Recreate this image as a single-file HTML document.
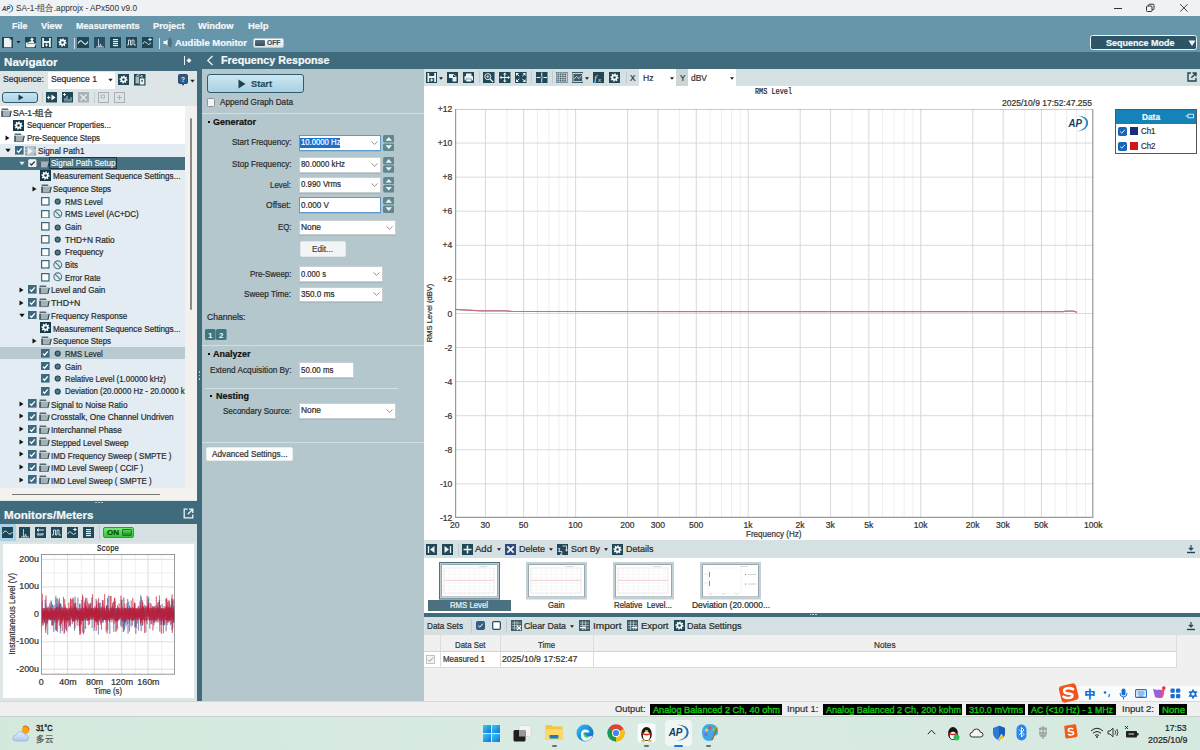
<!DOCTYPE html><html><head><meta charset="utf-8"><title>APx500</title><style>
*{margin:0;padding:0;box-sizing:border-box}
html,body{width:1200px;height:750px;overflow:hidden;background:#fff;font-family:'Liberation Sans',sans-serif}
div,span,svg{position:absolute}
.t{white-space:pre}
.t{-webkit-text-stroke:0.22px currentColor}
</style></head><body><div style="left:0px;top:0px;width:1200px;height:16px;background:#eef2f4"></div>
<div style="left:0px;top:16px;width:1200px;height:35.5px;background:#6795a9"></div>
<div style="left:0px;top:51.5px;width:1200px;height:17.5px;background:#406b7c"></div>
<div style="left:0px;top:69px;width:197px;height:632px;background:#dde5e7"></div>
<div style="left:0px;top:69px;width:197px;height:1.75px;background:#406b7c"></div>
<div style="left:197px;top:69px;width:5px;height:632px;background:#406b7c"></div>
<div style="left:202px;top:69px;width:221.5px;height:632px;background:#b4c7cc"></div>
<div style="left:423.5px;top:69px;width:776.5px;height:17px;background:#d5e0e2"></div>
<div style="left:423.5px;top:86px;width:776.5px;height:454px;background:#fff"></div>
<div style="left:423.5px;top:540px;width:776.5px;height:18px;background:#d5e0e2"></div>
<div style="left:423.5px;top:558px;width:776.5px;height:54.5px;background:#fff"></div>
<div style="left:423.5px;top:612.5px;width:776.5px;height:4.5px;background:#406b7c"></div>
<div style="left:423.5px;top:617px;width:776.5px;height:18px;background:#d5e0e2"></div>
<div style="left:423.5px;top:635px;width:776.5px;height:66px;background:#f0f0f0"></div>
<div style="left:0px;top:701px;width:1200px;height:15px;background:#f0f0f0;border-top:1px solid #d8d8d8"></div>
<div style="left:0px;top:716px;width:1200px;height:34px;background:linear-gradient(90deg,#d4e8dc,#d9ebe2 50%,#d6e9df)"></div>
<svg style="left:1px;top:2.5px" width="13" height="11" viewBox="0 0 23 19"><path d="M10.5 1.4 Q22 2 21.7 9.4 Q21.3 17 10 17.8 Q19.4 15.6 19.6 9.4 Q19.7 3.5 10.5 1.4Z" fill="#2e7fb0"/><text x="1.8" y="13.6" font-family="Liberation Sans" font-weight="700" font-style="italic" font-size="11.5" fill="#1c4a6a" transform="scale(0.92 1)">AP</text></svg>
<span class="t" style="left:16.00px;top:3.79px;font-size:8.99px;line-height:8.99px;font-weight:400;color:#303030;font-family:'Liberation Sans';transform:scaleX(0.9210);transform-origin:0 0;-webkit-text-stroke:0;">SA-1-组合.approjx - APx500 v9.0</span>
<div style="left:1114px;top:7.5px;width:7.5px;height:0.9px;background:#333"></div>
<svg style="left:1145px;top:3px" width="11" height="10" viewBox="0 0 11 10">
<rect x="1.5" y="3" width="5.5" height="5.5" rx="1" fill="none" stroke="#333" stroke-width="1"/>
<path d="M3.5 3 V2.2 Q3.5 1.2 4.5 1.2 H8 Q9 1.2 9 2.2 V5.8 Q9 6.8 8 6.8 H7" fill="none" stroke="#333" stroke-width="1"/></svg>
<svg style="left:1179px;top:3px" width="10" height="10" viewBox="0 0 10 10">
<path d="M1.2 1.2 L8.6 8.6 M8.6 1.2 L1.2 8.6" stroke="#333" stroke-width="0.95"/></svg>
<span class="t" style="left:12.00px;top:20.90px;font-size:9.8px;line-height:9.8px;font-weight:700;color:#f4f8fa;font-family:'Liberation Sans';transform:scaleX(0.9177);transform-origin:0 0;">File</span>
<span class="t" style="left:41.00px;top:20.90px;font-size:9.8px;line-height:9.8px;font-weight:700;color:#f4f8fa;font-family:'Liberation Sans';transform:scaleX(0.9478);transform-origin:0 0;">View</span>
<span class="t" style="left:76.00px;top:20.90px;font-size:9.8px;line-height:9.8px;font-weight:700;color:#f4f8fa;font-family:'Liberation Sans';transform:scaleX(0.9255);transform-origin:0 0;">Measurements</span>
<span class="t" style="left:153.00px;top:20.90px;font-size:9.8px;line-height:9.8px;font-weight:700;color:#f4f8fa;font-family:'Liberation Sans';transform:scaleX(0.9483);transform-origin:0 0;">Project</span>
<span class="t" style="left:198.00px;top:20.90px;font-size:9.8px;line-height:9.8px;font-weight:700;color:#f4f8fa;font-family:'Liberation Sans';transform:scaleX(0.9475);transform-origin:0 0;">Window</span>
<span class="t" style="left:248.00px;top:20.90px;font-size:9.8px;line-height:9.8px;font-weight:700;color:#f4f8fa;font-family:'Liberation Sans';transform:scaleX(0.9654);transform-origin:0 0;">Help</span>
<svg style="left:1.5px;top:37px" width="11.5" height="11" viewBox="0 0 11.5 11"><rect width="11.5" height="11" fill="#1f4756"/><path d="M2 1 H7 L9.5 3.5 V10.3 H2 Z" fill="#eef2f3"/><path d="M7 1 V3.5 H9.5" fill="#c5d0d4"/></svg>
<svg style="left:16px;top:40px" width="5" height="4" viewBox="0 0 5 4"><path d="M0.5 1 H4.5 L2.5 3.5Z" fill="#10232b"/></svg>
<svg style="left:24.5px;top:37px" width="11.5" height="11" viewBox="0 0 11.5 11"><rect width="11.5" height="11" fill="#1f4756"/><path d="M0.8 5.5 H3.5 L4.3 4.5 H9 V6 H3 L1.2 10.3 H0.8Z" fill="#eef2f3"/><path d="M3 6.5 H11 L9.3 10.3 H1.2Z" fill="#eef2f3"/><path d="M7 0.5 L9.2 2.8 H7.8 V5 H6.2 V2.8 H4.8Z" fill="#fff"/></svg>
<svg style="left:41px;top:37px" width="11" height="11" viewBox="0 0 11 11"><rect width="11" height="11" fill="#1f4756"/><rect x="1.2" y="1" width="8.6" height="9" fill="#e8eef0"/><rect x="3" y="1" width="5" height="3" fill="#1f4756"/><rect x="3" y="6" width="5" height="4" fill="#1f4756"/><path d="M5.5 6.5 V9.5 M4 8 H7" stroke="#fff" stroke-width="0.9"/></svg>
<svg style="left:57px;top:37px" width="11" height="11" viewBox="0 0 11 11"><rect width="11" height="11" fill="#1f4756"/><path d="M5.71 1.21 L6.54 1.33 L6.83 2.70 L7.35 3.01 L8.69 2.61 L9.19 3.29 L8.42 4.46 L8.57 5.05 L9.79 5.71 L9.67 6.54 L8.30 6.83 L7.99 7.35 L8.39 8.69 L7.71 9.19 L6.54 8.42 L5.95 8.57 L5.29 9.79 L4.46 9.67 L4.17 8.30 L3.65 7.99 L2.31 8.39 L1.81 7.71 L2.58 6.54 L2.43 5.95 L1.21 5.29 L1.33 4.46 L2.70 4.17 L3.01 3.65 L2.61 2.31 L3.29 1.81 L4.46 2.58 L5.05 2.43Z" fill="#f4f7f8"/><circle cx="5.5" cy="5.5" r="1.25" fill="#1f4756"/></svg>
<div style="left:73.5px;top:38px;width:1.5px;height:11px;background:#d7e3e8"></div>
<svg style="left:77px;top:37px" width="12" height="11" viewBox="0 0 12 11"><rect width="12" height="11" fill="#1f4756"/><path d="M1 6.5 Q3.2 1.8 6 5.5 T11 4.5" fill="none" stroke="#dfe9ec" stroke-width="1.1"/></svg>
<svg style="left:94px;top:37px" width="11" height="11" viewBox="0 0 11 11"><rect width="11" height="11" fill="#24506a"/><path d="M2 10 H10 M4.5 10 V2 M5.5 10 L6.5 7 L7.5 10" fill="none" stroke="#dfe9ec" stroke-width="0.8"/></svg>
<svg style="left:110px;top:37px" width="11" height="11" viewBox="0 0 11 11"><rect width="11" height="11" fill="#1f4756"/><rect x="3" y="2" width="5" height="1.2" fill="#dfe9ec"/><rect x="3" y="4" width="5" height="1.2" fill="#dfe9ec"/><rect x="3" y="6" width="5" height="1.2" fill="#dfe9ec"/><rect x="3" y="8" width="5" height="1.2" fill="#dfe9ec"/></svg>
<svg style="left:126px;top:37px" width="11" height="11" viewBox="0 0 11 11"><rect width="11" height="11" fill="#1f4756"/><path d="M1 8 H2.5 V3 H4.5 V8 H6 V3 H8 V8 H10" fill="none" stroke="#dfe9ec" stroke-width="0.9"/></svg>
<svg style="left:142px;top:37px" width="11" height="11" viewBox="0 0 11 11"><rect width="11" height="11" fill="#1f4756"/><path d="M0.8 7 Q2.5 3 4.5 6 T9 6" fill="none" stroke="#dfe9ec" stroke-width="0.9"/><path d="M8 0.8 V4.2 M6.3 2.5 H9.7" stroke="#fff" stroke-width="1"/></svg>
<div style="left:158.5px;top:38px;width:1.5px;height:11px;background:#d7e3e8"></div>
<svg style="left:162.5px;top:37px" width="10" height="11" viewBox="0 0 10 11"><path d="M0.5 4 H2.5 L4.5 2.5 V8.5 L2.5 7 H0.5Z" fill="#eef3f5"/><path d="M5 2.2 L8 0.5 Q9.8 5.5 8 10.5 L5 8.8Z" fill="#52707c"/></svg>
<span class="t" style="left:175.00px;top:38.20px;font-size:9.8px;line-height:9.8px;font-weight:700;color:#f4f8fa;font-family:'Liberation Sans';transform:scaleX(0.9656);transform-origin:0 0;">Audible Monitor</span>
<div style="left:253px;top:37.5px;width:31px;height:10.5px;background:linear-gradient(#fdfdfd,#dfe3e5);border:1px solid #b9c7cc;border-radius:2px"></div>
<div style="left:255px;top:39.5px;width:10px;height:6.5px;background:linear-gradient(#56778a,#30505e);border-radius:1px"></div>
<span class="t" style="left:267.00px;top:39.30px;font-size:7.92px;line-height:7.92px;font-weight:700;color:#3b4e57;font-family:'Liberation Sans';transform:scaleX(0.8538);transform-origin:0 0;">OFF</span>
<div style="left:1090px;top:35px;width:107px;height:15.3px;background:#2e5565;border:1.3px solid #f0f4f6;border-radius:2.5px"></div>
<span class="t" style="left:1105.50px;top:37.90px;font-size:9.8px;line-height:9.8px;font-weight:700;color:#f4f8fa;font-family:'Liberation Sans';transform:scaleX(0.9183);transform-origin:0 0;">Sequence Mode</span>
<svg style="left:1187.5px;top:39px" width="8" height="8" viewBox="0 0 8 8"><path d="M0.5 1.5 H7.5 L4 7Z" fill="#f4f8fa"/></svg>
<span class="t" style="left:3.50px;top:55.65px;font-size:11.75px;line-height:11.75px;font-weight:700;color:#f4f8fa;font-family:'Liberation Sans';transform:scaleX(0.9870);transform-origin:0 0;">Navigator</span>
<div style="left:184px;top:56px;width:1.3px;height:9px;background:#eef3f5"></div>
<svg style="left:186px;top:57px" width="6" height="7" viewBox="0 0 6 7"><path d="M0.5 3.5 L3 1 L5.5 3.5 L3 6Z" fill="#eef3f5"/></svg>
<svg style="left:206px;top:55px" width="8" height="11" viewBox="0 0 8 11"><path d="M6.5 1 L1.8 5.5 L6.5 10" fill="none" stroke="#eef3f5" stroke-width="1.3"/></svg>
<span class="t" style="left:221.00px;top:54.58px;font-size:11.13px;line-height:11.13px;font-weight:700;color:#f4f8fa;font-family:'Liberation Sans';transform:scaleX(0.9642);transform-origin:0 0;">Frequency Response</span>
<span class="t" style="left:2.50px;top:74.78px;font-size:8.88px;line-height:8.88px;font-weight:400;color:#2d2d2d;font-family:'Liberation Sans';transform:scaleX(0.9658);transform-origin:0 0;">Sequence:</span>
<div style="left:48px;top:71.5px;width:67px;height:17px;background:#fff"></div>
<span class="t" style="left:51.00px;top:74.78px;font-size:8.88px;line-height:8.88px;font-weight:400;color:#2d2d2d;font-family:'Liberation Sans';transform:scaleX(0.9710);transform-origin:0 0;">Sequence 1</span>
<svg style="left:108px;top:78px" width="5" height="4" viewBox="0 0 5 4"><path d="M0.3 0.8 H4.7 L2.5 3.4Z" fill="#222"/></svg>
<svg style="left:118px;top:74.3px" width="11" height="11" viewBox="0 0 11 11"><rect width="11" height="11" fill="#1f4756"/><path d="M5.71 1.31 L6.52 1.43 L6.78 2.79 L7.29 3.09 L8.61 2.68 L9.10 3.34 L8.32 4.49 L8.47 5.06 L9.69 5.71 L9.57 6.52 L8.21 6.78 L7.91 7.29 L8.32 8.61 L7.66 9.10 L6.51 8.32 L5.94 8.47 L5.29 9.69 L4.48 9.57 L4.22 8.21 L3.71 7.91 L2.39 8.32 L1.90 7.66 L2.68 6.51 L2.53 5.94 L1.31 5.29 L1.43 4.48 L2.79 4.22 L3.09 3.71 L2.68 2.39 L3.34 1.90 L4.49 2.68 L5.06 2.53Z" fill="#f4f7f8"/><circle cx="5.5" cy="5.5" r="1.2" fill="#1f4756"/></svg>
<svg style="left:134px;top:74.3px" width="11.5" height="11.5" viewBox="0 0 11.5 11.5"><rect width="11.5" height="11.5" fill="#1f4756"/><path d="M1.5 2.5 H5 V9.5 H1.5Z" fill="#a9bcc3"/><path d="M2.5 1.5 L5.5 0.8" stroke="#fff" stroke-width="0.8"/><rect x="5.8" y="4.5" width="4.5" height="6" fill="#eef2f3"/><rect x="7" y="6.3" width="2" height="1.2" fill="#1f4756"/><path d="M5.5 3 L8 1.2 V4" fill="none" stroke="#eef2f3" stroke-width="0.8"/></svg>
<svg style="left:178px;top:74px" width="10" height="12" viewBox="0 0 10 12"><path d="M1.5 0.5 H8.5 Q9.5 0.5 9.5 1.5 V8.5 Q9.5 9.5 8.5 9.5 H6 L5 11.3 L4 9.5 H1.5 Q0.5 9.5 0.5 8.5 V1.5 Q0.5 0.5 1.5 0.5Z" fill="#2a5a86" stroke="#173b59" stroke-width="0.8"/><text x="5" y="7.6" text-anchor="middle" font-family="Liberation Sans" font-weight="700" font-size="6.5" fill="#e8f0f8">?</text></svg>
<svg style="left:189.5px;top:79px" width="5" height="4" viewBox="0 0 5 4"><path d="M0.3 0.8 H4.7 L2.5 3.4Z" fill="#222"/></svg>
<div style="left:2px;top:92px;width:36px;height:10.5px;background:linear-gradient(#c8e4f0,#a9d2e4);border:1.2px solid #2f5c6c;border-radius:3px"></div>
<svg style="left:18px;top:94px" width="6" height="7" viewBox="0 0 6 7"><path d="M0.5 0.5 L5.5 3.5 L0.5 6.5Z" fill="#1d4250"/></svg>
<div style="left:41.5px;top:92px;width:0.8px;height:11px;background:#c5cfd2"></div>
<svg style="left:46px;top:92px" width="11" height="10.5" viewBox="0 0 11 10.5"><rect width="11" height="10.5" fill="#1f4756"/><path d="M1 5.5 H4.5 M2.7 3.7 V7.3" stroke="#fff" stroke-width="0.9"/><path d="M5.5 2.5 L9.5 5.5 L5.5 8.5Z" fill="#fff"/><rect x="0" y="4.9" width="11" height="0.0" fill="none"/></svg>
<svg style="left:62px;top:92px" width="11" height="10.5" viewBox="0 0 11 10.5"><rect width="11" height="10.5" fill="#1f4756"/><path d="M1 2.5 H4 M2.5 1 V4" stroke="#fff" stroke-width="0.9"/><path d="M3 9.5 V6 M5 9.5 V4 M7 9.5 V7 M9 9.5 V5" stroke="#bcd0d8" stroke-width="1"/></svg>
<svg style="left:78px;top:92px" width="11" height="11" viewBox="0 0 11 11"><rect width="11" height="10.5" fill="#a9b1b4"/><path d="M2.5 2.5 L8.5 8.5 M8.5 2.5 L2.5 8.5" stroke="#eef0f1" stroke-width="1.2"/></svg>
<div style="left:94px;top:92px;width:0.8px;height:11px;background:#c5cfd2"></div>
<svg style="left:98px;top:92px" width="11" height="11" viewBox="0 0 11 11"><rect x="0.5" y="0.5" width="10" height="10" fill="#dfe3e4" stroke="#a9b1b4" stroke-width="1"/><path d="M3 3 H6.5 V6 H3Z" fill="none" stroke="#a9b1b4" stroke-width="0.9"/></svg>
<svg style="left:114px;top:92px" width="11" height="11" viewBox="0 0 11 11"><rect x="0.5" y="0.5" width="10" height="10" fill="#dfe3e4" stroke="#a9b1b4" stroke-width="1"/><path d="M5.5 3 V8 M3 5.5 H8" stroke="#a9b1b4" stroke-width="0.9"/></svg>
<div style="left:0px;top:106px;width:185.2px;height:38px;background:#fff"></div>
<div style="left:0px;top:144px;width:185.2px;height:343.5px;background:#e2ecf2"></div>
<div style="left:185.2px;top:106px;width:11.8px;height:381.5px;background:#f3f1ee"></div>
<div style="left:190px;top:118px;width:2px;height:192px;background:#8a8a8a;border-radius:1px"></div>
<div style="left:0px;top:487.5px;width:197px;height:12.5px;background:#f3f2ef"></div>
<div style="left:12px;top:494px;width:148px;height:1.2px;background:#777"></div>
<svg style="left:1px;top:108.0325px" width="11" height="9.5" viewBox="0 0 11 9.5"><path d="M0.6 0.4 H6.6 Q7.3 0.4 7.3 1.1 V1.9 H0.6Z" fill="#56686e"/><path d="M0.4 2.6 H10.7 L9.3 8.9 H0.4Z" fill="#a3b2b6"/><path d="M1.05 2.8 V8.8" stroke="#2c3c42" stroke-width="1.3"/><path d="M10.2 3 L8.9 8.7" stroke="#2c3c42" stroke-width="1.1"/><path d="M0.6 8.6 H9.2" stroke="#56676c" stroke-width="0.7"/></svg>
<span class="t" style="left:13.00px;top:108.63px;font-size:8.88px;line-height:8.88px;font-weight:400;color:#2b2b2b;font-family:'Liberation Sans';transform:scaleX(0.9708);transform-origin:0 0;">SA-1-组合</span>
<svg style="left:13px;top:119.6975px" width="11" height="11" viewBox="0 0 11 11"><rect width="11" height="11" fill="#12394a"/><path d="M5.71 1.21 L6.54 1.33 L6.83 2.70 L7.35 3.01 L8.69 2.61 L9.19 3.29 L8.42 4.46 L8.57 5.05 L9.79 5.71 L9.67 6.54 L8.30 6.83 L7.99 7.35 L8.39 8.69 L7.71 9.19 L6.54 8.42 L5.95 8.57 L5.29 9.79 L4.46 9.67 L4.17 8.30 L3.65 7.99 L2.31 8.39 L1.81 7.71 L2.58 6.54 L2.43 5.95 L1.21 5.29 L1.33 4.46 L2.70 4.17 L3.01 3.65 L2.61 2.31 L3.29 1.81 L4.46 2.58 L5.05 2.43Z" fill="#f4f7f8"/><circle cx="5.5" cy="5.5" r="1.25" fill="#12394a"/></svg>
<span class="t" style="left:27.00px;top:121.33px;font-size:8.88px;line-height:8.88px;font-weight:400;color:#2b2b2b;font-family:'Liberation Sans';transform:scaleX(0.9008);transform-origin:0 0;">Sequencer Properties...</span>
<svg style="left:5px;top:134.8625px" width="5" height="6" viewBox="0 0 5 6"><path d="M0.5 0.5 L4.5 3 L0.5 5.5Z" fill="#111"/></svg>
<svg style="left:14px;top:133.3625px" width="11" height="9.5" viewBox="0 0 11 9.5"><path d="M0.6 0.4 H6.6 Q7.3 0.4 7.3 1.1 V1.9 H0.6Z" fill="#56686e"/><path d="M0.4 2.6 H10.7 L9.3 8.9 H0.4Z" fill="#a3b2b6"/><path d="M1.05 2.8 V8.8" stroke="#2c3c42" stroke-width="1.3"/><path d="M10.2 3 L8.9 8.7" stroke="#2c3c42" stroke-width="1.1"/><path d="M0.6 8.6 H9.2" stroke="#56676c" stroke-width="0.7"/></svg>
<span class="t" style="left:27.00px;top:134.03px;font-size:8.88px;line-height:8.88px;font-weight:400;color:#2b2b2b;font-family:'Liberation Sans';transform:scaleX(0.8913);transform-origin:0 0;">Pre-Sequence Steps</span>
<svg style="left:5px;top:148.2275px" width="6" height="5" viewBox="0 0 6 5"><path d="M0.3 0.8 H5.7 L3 4.3Z" fill="#111"/></svg>
<svg style="left:15px;top:146.0275px" width="8.6" height="8.6" viewBox="0 0 9 9"><rect x="0" y="0" width="9" height="9" fill="#3b6a7f"/><path d="M2 4.8 L3.7 6.5 L7.1 2.4" fill="none" stroke="#fff" stroke-width="1.35"/></svg>
<svg style="left:25px;top:145.5275px" width="11" height="10" viewBox="0 0 11 10"><rect x="0" y="0" width="11" height="10" fill="#b5c5cb"/><path d="M3 1.5 L8 5 L3 8.5Z" fill="#e9eff1"/><path d="M0 2 H2 M0 5 H2 M0 8 H2 M9 2 H11 M9 8 H11" stroke="#6f8a94" stroke-width="1"/></svg>
<span class="t" style="left:38.00px;top:146.73px;font-size:8.88px;line-height:8.88px;font-weight:400;color:#2b2b2b;font-family:'Liberation Sans';transform:scaleX(0.9236);transform-origin:0 0;">Signal Path1</span>
<div style="left:0px;top:156.86px;width:185.2px;height:12.665px;background:#44707f"></div>
<svg style="left:19px;top:160.8925px" width="6" height="5" viewBox="0 0 6 5"><path d="M0.3 0.8 H5.7 L3 4.3Z" fill="#e8eef0"/></svg>
<svg style="left:28px;top:158.69250000000002px" width="8.6" height="8.6" viewBox="0 0 9 9"><rect x="0.5" y="0.5" width="8" height="8" rx="1.2" fill="#f4f7f8" stroke="#d8e2e6" stroke-width="0.8"/><path d="M2 4.6 L3.7 6.3 L7 2.6" fill="none" stroke="#2a3d45" stroke-width="1.3"/></svg>
<svg style="left:38.5px;top:158.69250000000002px" width="11" height="9.5" viewBox="0 0 11 9.5"><path d="M0.6 0.4 H6.6 Q7.3 0.4 7.3 1.1 V1.9 H0.6Z" fill="#56686e"/><path d="M0.4 2.6 H10.7 L9.3 8.9 H0.4Z" fill="#a3b2b6"/><path d="M1.05 2.8 V8.8" stroke="#2c3c42" stroke-width="1.3"/><path d="M10.2 3 L8.9 8.7" stroke="#2c3c42" stroke-width="1.1"/><path d="M0.6 8.6 H9.2" stroke="#56676c" stroke-width="0.7"/></svg>
<div style="left:49px;top:157.36px;width:67.5px;height:11.665px;border:0.8px solid #1d3440"></div>
<span class="t" style="left:51.00px;top:159.43px;font-size:8.88px;line-height:8.88px;font-weight:400;color:#f2f6f8;font-family:'Liberation Sans';transform:scaleX(0.9077);transform-origin:0 0;">Signal Path Setup</span>
<svg style="left:40px;top:170.35750000000002px" width="11" height="11" viewBox="0 0 11 11"><rect width="11" height="11" fill="#12394a"/><path d="M5.71 1.21 L6.54 1.33 L6.83 2.70 L7.35 3.01 L8.69 2.61 L9.19 3.29 L8.42 4.46 L8.57 5.05 L9.79 5.71 L9.67 6.54 L8.30 6.83 L7.99 7.35 L8.39 8.69 L7.71 9.19 L6.54 8.42 L5.95 8.57 L5.29 9.79 L4.46 9.67 L4.17 8.30 L3.65 7.99 L2.31 8.39 L1.81 7.71 L2.58 6.54 L2.43 5.95 L1.21 5.29 L1.33 4.46 L2.70 4.17 L3.01 3.65 L2.61 2.31 L3.29 1.81 L4.46 2.58 L5.05 2.43Z" fill="#f4f7f8"/><circle cx="5.5" cy="5.5" r="1.25" fill="#12394a"/></svg>
<span class="t" style="left:53.00px;top:172.13px;font-size:8.88px;line-height:8.88px;font-weight:400;color:#2b2b2b;font-family:'Liberation Sans';transform:scaleX(0.9196);transform-origin:0 0;">Measurement Sequence Settings...</span>
<svg style="left:32px;top:185.5225px" width="5" height="6" viewBox="0 0 5 6"><path d="M0.5 0.5 L4.5 3 L0.5 5.5Z" fill="#111"/></svg>
<svg style="left:41px;top:184.0225px" width="11" height="9.5" viewBox="0 0 11 9.5"><path d="M0.6 0.4 H6.6 Q7.3 0.4 7.3 1.1 V1.9 H0.6Z" fill="#56686e"/><path d="M0.4 2.6 H10.7 L9.3 8.9 H0.4Z" fill="#a3b2b6"/><path d="M1.05 2.8 V8.8" stroke="#2c3c42" stroke-width="1.3"/><path d="M10.2 3 L8.9 8.7" stroke="#2c3c42" stroke-width="1.1"/><path d="M0.6 8.6 H9.2" stroke="#56676c" stroke-width="0.7"/></svg>
<span class="t" style="left:53.00px;top:184.83px;font-size:8.88px;line-height:8.88px;font-weight:400;color:#2b2b2b;font-family:'Liberation Sans';transform:scaleX(0.8904);transform-origin:0 0;">Sequence Steps</span>
<svg style="left:41.4px;top:197.08750000000003px" width="8.6" height="8.6" viewBox="0 0 9 9"><rect x="0.65" y="0.65" width="7.7" height="7.7" fill="#fff" stroke="#3b6a7f" stroke-width="1.3"/></svg>
<svg style="left:54px;top:197.18750000000003px" width="8" height="8" viewBox="0 0 8 8"><circle cx="3.7" cy="4.5" r="2.55" fill="#4f7b88" stroke="#22414c" stroke-width="1.05"/></svg>
<span class="t" style="left:65.00px;top:197.53px;font-size:8.88px;line-height:8.88px;font-weight:400;color:#2b2b2b;font-family:'Liberation Sans';transform:scaleX(0.8685);transform-origin:0 0;">RMS Level</span>
<svg style="left:41.4px;top:209.7525px" width="8.6" height="8.6" viewBox="0 0 9 9"><rect x="0.65" y="0.65" width="7.7" height="7.7" fill="#fff" stroke="#3b6a7f" stroke-width="1.3"/></svg>
<svg style="left:53px;top:209.05249999999998px" width="10" height="10" viewBox="0 0 10 10"><circle cx="4.8" cy="4.8" r="3.9" fill="none" stroke="#4a7c88" stroke-width="1.1"/><path d="M2.1 2.1 L7.5 7.5" stroke="#4a7c88" stroke-width="1.1"/></svg>
<span class="t" style="left:65.00px;top:210.23px;font-size:8.88px;line-height:8.88px;font-weight:400;color:#2b2b2b;font-family:'Liberation Sans';transform:scaleX(0.8974);transform-origin:0 0;">RMS Level (AC+DC)</span>
<svg style="left:41.4px;top:222.41750000000002px" width="8.6" height="8.6" viewBox="0 0 9 9"><rect x="0.65" y="0.65" width="7.7" height="7.7" fill="#fff" stroke="#3b6a7f" stroke-width="1.3"/></svg>
<svg style="left:54px;top:222.5175px" width="8" height="8" viewBox="0 0 8 8"><circle cx="3.7" cy="4.5" r="2.55" fill="#4f7b88" stroke="#22414c" stroke-width="1.05"/></svg>
<span class="t" style="left:65.00px;top:222.93px;font-size:8.88px;line-height:8.88px;font-weight:400;color:#2b2b2b;font-family:'Liberation Sans';transform:scaleX(0.8853);transform-origin:0 0;">Gain</span>
<svg style="left:41.4px;top:235.0825px" width="8.6" height="8.6" viewBox="0 0 9 9"><rect x="0.65" y="0.65" width="7.7" height="7.7" fill="#fff" stroke="#3b6a7f" stroke-width="1.3"/></svg>
<svg style="left:54px;top:235.1825px" width="8" height="8" viewBox="0 0 8 8"><circle cx="3.7" cy="4.5" r="2.55" fill="#4f7b88" stroke="#22414c" stroke-width="1.05"/></svg>
<span class="t" style="left:65.00px;top:235.63px;font-size:8.88px;line-height:8.88px;font-weight:400;color:#2b2b2b;font-family:'Liberation Sans';transform:scaleX(0.9353);transform-origin:0 0;">THD+N Ratio</span>
<svg style="left:41.4px;top:247.7475px" width="8.6" height="8.6" viewBox="0 0 9 9"><rect x="0.65" y="0.65" width="7.7" height="7.7" fill="#fff" stroke="#3b6a7f" stroke-width="1.3"/></svg>
<svg style="left:54px;top:247.8475px" width="8" height="8" viewBox="0 0 8 8"><circle cx="3.7" cy="4.5" r="2.55" fill="#4f7b88" stroke="#22414c" stroke-width="1.05"/></svg>
<span class="t" style="left:65.00px;top:248.33px;font-size:8.88px;line-height:8.88px;font-weight:400;color:#2b2b2b;font-family:'Liberation Sans';transform:scaleX(0.9156);transform-origin:0 0;">Frequency</span>
<svg style="left:41.4px;top:260.41249999999997px" width="8.6" height="8.6" viewBox="0 0 9 9"><rect x="0.65" y="0.65" width="7.7" height="7.7" fill="#fff" stroke="#3b6a7f" stroke-width="1.3"/></svg>
<svg style="left:53px;top:259.7125px" width="10" height="10" viewBox="0 0 10 10"><circle cx="4.8" cy="4.8" r="3.9" fill="none" stroke="#4a7c88" stroke-width="1.1"/><path d="M2.1 2.1 L7.5 7.5" stroke="#4a7c88" stroke-width="1.1"/></svg>
<span class="t" style="left:65.00px;top:261.03px;font-size:8.88px;line-height:8.88px;font-weight:400;color:#2b2b2b;font-family:'Liberation Sans';transform:scaleX(0.8786);transform-origin:0 0;">Bits</span>
<svg style="left:41.4px;top:273.07749999999993px" width="8.6" height="8.6" viewBox="0 0 9 9"><rect x="0.65" y="0.65" width="7.7" height="7.7" fill="#fff" stroke="#3b6a7f" stroke-width="1.3"/></svg>
<svg style="left:53px;top:272.37749999999994px" width="10" height="10" viewBox="0 0 10 10"><circle cx="4.8" cy="4.8" r="3.9" fill="none" stroke="#4a7c88" stroke-width="1.1"/><path d="M2.1 2.1 L7.5 7.5" stroke="#4a7c88" stroke-width="1.1"/></svg>
<span class="t" style="left:65.00px;top:273.73px;font-size:8.88px;line-height:8.88px;font-weight:400;color:#2b2b2b;font-family:'Liberation Sans';transform:scaleX(0.8696);transform-origin:0 0;">Error Rate</span>
<svg style="left:19px;top:286.8425px" width="5" height="6" viewBox="0 0 5 6"><path d="M0.5 0.5 L4.5 3 L0.5 5.5Z" fill="#111"/></svg>
<svg style="left:28px;top:285.3425px" width="8.6" height="8.6" viewBox="0 0 9 9"><rect x="0" y="0" width="9" height="9" fill="#3b6a7f"/><path d="M2 4.8 L3.7 6.5 L7.1 2.4" fill="none" stroke="#fff" stroke-width="1.35"/></svg>
<svg style="left:38.5px;top:285.3425px" width="11" height="9.5" viewBox="0 0 11 9.5"><path d="M0.6 0.4 H6.6 Q7.3 0.4 7.3 1.1 V1.9 H0.6Z" fill="#56686e"/><path d="M0.4 2.6 H10.7 L9.3 8.9 H0.4Z" fill="#a3b2b6"/><path d="M1.05 2.8 V8.8" stroke="#2c3c42" stroke-width="1.3"/><path d="M10.2 3 L8.9 8.7" stroke="#2c3c42" stroke-width="1.1"/><path d="M0.6 8.6 H9.2" stroke="#56676c" stroke-width="0.7"/></svg>
<span class="t" style="left:51.00px;top:286.43px;font-size:8.88px;line-height:8.88px;font-weight:400;color:#2b2b2b;font-family:'Liberation Sans';transform:scaleX(0.9078);transform-origin:0 0;">Level and Gain</span>
<svg style="left:19px;top:299.5075px" width="5" height="6" viewBox="0 0 5 6"><path d="M0.5 0.5 L4.5 3 L0.5 5.5Z" fill="#111"/></svg>
<svg style="left:28px;top:298.0075px" width="8.6" height="8.6" viewBox="0 0 9 9"><rect x="0" y="0" width="9" height="9" fill="#3b6a7f"/><path d="M2 4.8 L3.7 6.5 L7.1 2.4" fill="none" stroke="#fff" stroke-width="1.35"/></svg>
<svg style="left:38.5px;top:298.0075px" width="11" height="9.5" viewBox="0 0 11 9.5"><path d="M0.6 0.4 H6.6 Q7.3 0.4 7.3 1.1 V1.9 H0.6Z" fill="#56686e"/><path d="M0.4 2.6 H10.7 L9.3 8.9 H0.4Z" fill="#a3b2b6"/><path d="M1.05 2.8 V8.8" stroke="#2c3c42" stroke-width="1.3"/><path d="M10.2 3 L8.9 8.7" stroke="#2c3c42" stroke-width="1.1"/><path d="M0.6 8.6 H9.2" stroke="#56676c" stroke-width="0.7"/></svg>
<span class="t" style="left:51.00px;top:299.13px;font-size:8.88px;line-height:8.88px;font-weight:400;color:#2b2b2b;font-family:'Liberation Sans';transform:scaleX(0.9851);transform-origin:0 0;">THD+N</span>
<svg style="left:19px;top:312.87249999999995px" width="6" height="5" viewBox="0 0 6 5"><path d="M0.3 0.8 H5.7 L3 4.3Z" fill="#111"/></svg>
<svg style="left:28px;top:310.67249999999996px" width="8.6" height="8.6" viewBox="0 0 9 9"><rect x="0" y="0" width="9" height="9" fill="#3b6a7f"/><path d="M2 4.8 L3.7 6.5 L7.1 2.4" fill="none" stroke="#fff" stroke-width="1.35"/></svg>
<svg style="left:38.5px;top:310.67249999999996px" width="11" height="9.5" viewBox="0 0 11 9.5"><path d="M0.6 0.4 H6.6 Q7.3 0.4 7.3 1.1 V1.9 H0.6Z" fill="#56686e"/><path d="M0.4 2.6 H10.7 L9.3 8.9 H0.4Z" fill="#a3b2b6"/><path d="M1.05 2.8 V8.8" stroke="#2c3c42" stroke-width="1.3"/><path d="M10.2 3 L8.9 8.7" stroke="#2c3c42" stroke-width="1.1"/><path d="M0.6 8.6 H9.2" stroke="#56676c" stroke-width="0.7"/></svg>
<span class="t" style="left:51.00px;top:311.83px;font-size:8.88px;line-height:8.88px;font-weight:400;color:#2b2b2b;font-family:'Liberation Sans';transform:scaleX(0.9031);transform-origin:0 0;">Frequency Response</span>
<svg style="left:40px;top:322.3375px" width="11" height="11" viewBox="0 0 11 11"><rect width="11" height="11" fill="#12394a"/><path d="M5.71 1.21 L6.54 1.33 L6.83 2.70 L7.35 3.01 L8.69 2.61 L9.19 3.29 L8.42 4.46 L8.57 5.05 L9.79 5.71 L9.67 6.54 L8.30 6.83 L7.99 7.35 L8.39 8.69 L7.71 9.19 L6.54 8.42 L5.95 8.57 L5.29 9.79 L4.46 9.67 L4.17 8.30 L3.65 7.99 L2.31 8.39 L1.81 7.71 L2.58 6.54 L2.43 5.95 L1.21 5.29 L1.33 4.46 L2.70 4.17 L3.01 3.65 L2.61 2.31 L3.29 1.81 L4.46 2.58 L5.05 2.43Z" fill="#f4f7f8"/><circle cx="5.5" cy="5.5" r="1.25" fill="#12394a"/></svg>
<span class="t" style="left:53.00px;top:324.53px;font-size:8.88px;line-height:8.88px;font-weight:400;color:#2b2b2b;font-family:'Liberation Sans';transform:scaleX(0.9196);transform-origin:0 0;">Measurement Sequence Settings...</span>
<svg style="left:32px;top:337.50249999999994px" width="5" height="6" viewBox="0 0 5 6"><path d="M0.5 0.5 L4.5 3 L0.5 5.5Z" fill="#111"/></svg>
<svg style="left:41px;top:336.00249999999994px" width="11" height="9.5" viewBox="0 0 11 9.5"><path d="M0.6 0.4 H6.6 Q7.3 0.4 7.3 1.1 V1.9 H0.6Z" fill="#56686e"/><path d="M0.4 2.6 H10.7 L9.3 8.9 H0.4Z" fill="#a3b2b6"/><path d="M1.05 2.8 V8.8" stroke="#2c3c42" stroke-width="1.3"/><path d="M10.2 3 L8.9 8.7" stroke="#2c3c42" stroke-width="1.1"/><path d="M0.6 8.6 H9.2" stroke="#56676c" stroke-width="0.7"/></svg>
<span class="t" style="left:53.00px;top:337.23px;font-size:8.88px;line-height:8.88px;font-weight:400;color:#2b2b2b;font-family:'Liberation Sans';transform:scaleX(0.8904);transform-origin:0 0;">Sequence Steps</span>
<div style="left:0px;top:346.835px;width:185.2px;height:12.665px;background:#b9c9d0"></div>
<svg style="left:41.4px;top:349.06749999999994px" width="8.6" height="8.6" viewBox="0 0 9 9"><rect x="0" y="0" width="9" height="9" fill="#3b6a7f"/><path d="M2 4.8 L3.7 6.5 L7.1 2.4" fill="none" stroke="#fff" stroke-width="1.35"/></svg>
<svg style="left:54px;top:349.16749999999996px" width="8" height="8" viewBox="0 0 8 8"><circle cx="3.7" cy="4.5" r="2.55" fill="#4f7b88" stroke="#22414c" stroke-width="1.05"/></svg>
<span class="t" style="left:65.00px;top:349.93px;font-size:8.88px;line-height:8.88px;font-weight:400;color:#2b2b2b;font-family:'Liberation Sans';transform:scaleX(0.8685);transform-origin:0 0;">RMS Level</span>
<svg style="left:41.4px;top:361.73249999999996px" width="8.6" height="8.6" viewBox="0 0 9 9"><rect x="0" y="0" width="9" height="9" fill="#3b6a7f"/><path d="M2 4.8 L3.7 6.5 L7.1 2.4" fill="none" stroke="#fff" stroke-width="1.35"/></svg>
<svg style="left:54px;top:361.8325px" width="8" height="8" viewBox="0 0 8 8"><circle cx="3.7" cy="4.5" r="2.55" fill="#4f7b88" stroke="#22414c" stroke-width="1.05"/></svg>
<span class="t" style="left:65.00px;top:362.63px;font-size:8.88px;line-height:8.88px;font-weight:400;color:#2b2b2b;font-family:'Liberation Sans';transform:scaleX(0.8853);transform-origin:0 0;">Gain</span>
<svg style="left:41.4px;top:374.3974999999999px" width="8.6" height="8.6" viewBox="0 0 9 9"><rect x="0" y="0" width="9" height="9" fill="#3b6a7f"/><path d="M2 4.8 L3.7 6.5 L7.1 2.4" fill="none" stroke="#fff" stroke-width="1.35"/></svg>
<svg style="left:54px;top:374.49749999999995px" width="8" height="8" viewBox="0 0 8 8"><circle cx="3.7" cy="4.5" r="2.55" fill="#4f7b88" stroke="#22414c" stroke-width="1.05"/></svg>
<span class="t" style="left:65.00px;top:375.33px;font-size:8.88px;line-height:8.88px;font-weight:400;color:#2b2b2b;font-family:'Liberation Sans';transform:scaleX(0.8862);transform-origin:0 0;">Relative Level (1.00000 kHz)</span>
<svg style="left:41.4px;top:387.06249999999994px" width="8.6" height="8.6" viewBox="0 0 9 9"><rect x="0" y="0" width="9" height="9" fill="#3b6a7f"/><path d="M2 4.8 L3.7 6.5 L7.1 2.4" fill="none" stroke="#fff" stroke-width="1.35"/></svg>
<svg style="left:54px;top:387.16249999999997px" width="8" height="8" viewBox="0 0 8 8"><circle cx="3.7" cy="4.5" r="2.55" fill="#4f7b88" stroke="#22414c" stroke-width="1.05"/></svg>
<div style="left:65px;top:384.83px;width:120.19999999999999px;height:12.665px;overflow:hidden">
<span class="t" style="left:0.00px;top:2.38px;font-size:8.88px;line-height:8.88px;font-weight:400;color:#2b2b2b;font-family:'Liberation Sans';transform:scaleX(0.8895);transform-origin:0 0;">Deviation (20.0000 Hz - 20.0000 kHz)</span>
</div>
<svg style="left:19px;top:400.82749999999993px" width="5" height="6" viewBox="0 0 5 6"><path d="M0.5 0.5 L4.5 3 L0.5 5.5Z" fill="#111"/></svg>
<svg style="left:28px;top:399.32749999999993px" width="8.6" height="8.6" viewBox="0 0 9 9"><rect x="0" y="0" width="9" height="9" fill="#3b6a7f"/><path d="M2 4.8 L3.7 6.5 L7.1 2.4" fill="none" stroke="#fff" stroke-width="1.35"/></svg>
<svg style="left:38.5px;top:399.32749999999993px" width="11" height="9.5" viewBox="0 0 11 9.5"><path d="M0.6 0.4 H6.6 Q7.3 0.4 7.3 1.1 V1.9 H0.6Z" fill="#56686e"/><path d="M0.4 2.6 H10.7 L9.3 8.9 H0.4Z" fill="#a3b2b6"/><path d="M1.05 2.8 V8.8" stroke="#2c3c42" stroke-width="1.3"/><path d="M10.2 3 L8.9 8.7" stroke="#2c3c42" stroke-width="1.1"/><path d="M0.6 8.6 H9.2" stroke="#56676c" stroke-width="0.7"/></svg>
<span class="t" style="left:51.00px;top:400.73px;font-size:8.88px;line-height:8.88px;font-weight:400;color:#2b2b2b;font-family:'Liberation Sans';transform:scaleX(0.9229);transform-origin:0 0;">Signal to Noise Ratio</span>
<svg style="left:19px;top:413.49249999999995px" width="5" height="6" viewBox="0 0 5 6"><path d="M0.5 0.5 L4.5 3 L0.5 5.5Z" fill="#111"/></svg>
<svg style="left:28px;top:411.99249999999995px" width="8.6" height="8.6" viewBox="0 0 9 9"><rect x="0" y="0" width="9" height="9" fill="#3b6a7f"/><path d="M2 4.8 L3.7 6.5 L7.1 2.4" fill="none" stroke="#fff" stroke-width="1.35"/></svg>
<svg style="left:38.5px;top:411.99249999999995px" width="11" height="9.5" viewBox="0 0 11 9.5"><path d="M0.6 0.4 H6.6 Q7.3 0.4 7.3 1.1 V1.9 H0.6Z" fill="#56686e"/><path d="M0.4 2.6 H10.7 L9.3 8.9 H0.4Z" fill="#a3b2b6"/><path d="M1.05 2.8 V8.8" stroke="#2c3c42" stroke-width="1.3"/><path d="M10.2 3 L8.9 8.7" stroke="#2c3c42" stroke-width="1.1"/><path d="M0.6 8.6 H9.2" stroke="#56676c" stroke-width="0.7"/></svg>
<span class="t" style="left:51.00px;top:413.43px;font-size:8.88px;line-height:8.88px;font-weight:400;color:#2b2b2b;font-family:'Liberation Sans';transform:scaleX(0.9274);transform-origin:0 0;">Crosstalk, One Channel Undriven</span>
<svg style="left:19px;top:426.15749999999997px" width="5" height="6" viewBox="0 0 5 6"><path d="M0.5 0.5 L4.5 3 L0.5 5.5Z" fill="#111"/></svg>
<svg style="left:28px;top:424.65749999999997px" width="8.6" height="8.6" viewBox="0 0 9 9"><rect x="0" y="0" width="9" height="9" fill="#3b6a7f"/><path d="M2 4.8 L3.7 6.5 L7.1 2.4" fill="none" stroke="#fff" stroke-width="1.35"/></svg>
<svg style="left:38.5px;top:424.65749999999997px" width="11" height="9.5" viewBox="0 0 11 9.5"><path d="M0.6 0.4 H6.6 Q7.3 0.4 7.3 1.1 V1.9 H0.6Z" fill="#56686e"/><path d="M0.4 2.6 H10.7 L9.3 8.9 H0.4Z" fill="#a3b2b6"/><path d="M1.05 2.8 V8.8" stroke="#2c3c42" stroke-width="1.3"/><path d="M10.2 3 L8.9 8.7" stroke="#2c3c42" stroke-width="1.1"/><path d="M0.6 8.6 H9.2" stroke="#56676c" stroke-width="0.7"/></svg>
<span class="t" style="left:51.00px;top:426.13px;font-size:8.88px;line-height:8.88px;font-weight:400;color:#2b2b2b;font-family:'Liberation Sans';transform:scaleX(0.9244);transform-origin:0 0;">Interchannel Phase</span>
<svg style="left:19px;top:438.82249999999993px" width="5" height="6" viewBox="0 0 5 6"><path d="M0.5 0.5 L4.5 3 L0.5 5.5Z" fill="#111"/></svg>
<svg style="left:28px;top:437.32249999999993px" width="8.6" height="8.6" viewBox="0 0 9 9"><rect x="0" y="0" width="9" height="9" fill="#3b6a7f"/><path d="M2 4.8 L3.7 6.5 L7.1 2.4" fill="none" stroke="#fff" stroke-width="1.35"/></svg>
<svg style="left:38.5px;top:437.32249999999993px" width="11" height="9.5" viewBox="0 0 11 9.5"><path d="M0.6 0.4 H6.6 Q7.3 0.4 7.3 1.1 V1.9 H0.6Z" fill="#56686e"/><path d="M0.4 2.6 H10.7 L9.3 8.9 H0.4Z" fill="#a3b2b6"/><path d="M1.05 2.8 V8.8" stroke="#2c3c42" stroke-width="1.3"/><path d="M10.2 3 L8.9 8.7" stroke="#2c3c42" stroke-width="1.1"/><path d="M0.6 8.6 H9.2" stroke="#56676c" stroke-width="0.7"/></svg>
<span class="t" style="left:51.00px;top:438.83px;font-size:8.88px;line-height:8.88px;font-weight:400;color:#2b2b2b;font-family:'Liberation Sans';transform:scaleX(0.8974);transform-origin:0 0;">Stepped Level Sweep</span>
<svg style="left:19px;top:451.48749999999995px" width="5" height="6" viewBox="0 0 5 6"><path d="M0.5 0.5 L4.5 3 L0.5 5.5Z" fill="#111"/></svg>
<svg style="left:28px;top:449.98749999999995px" width="8.6" height="8.6" viewBox="0 0 9 9"><rect x="0" y="0" width="9" height="9" fill="#3b6a7f"/><path d="M2 4.8 L3.7 6.5 L7.1 2.4" fill="none" stroke="#fff" stroke-width="1.35"/></svg>
<svg style="left:38.5px;top:449.98749999999995px" width="11" height="9.5" viewBox="0 0 11 9.5"><path d="M0.6 0.4 H6.6 Q7.3 0.4 7.3 1.1 V1.9 H0.6Z" fill="#56686e"/><path d="M0.4 2.6 H10.7 L9.3 8.9 H0.4Z" fill="#a3b2b6"/><path d="M1.05 2.8 V8.8" stroke="#2c3c42" stroke-width="1.3"/><path d="M10.2 3 L8.9 8.7" stroke="#2c3c42" stroke-width="1.1"/><path d="M0.6 8.6 H9.2" stroke="#56676c" stroke-width="0.7"/></svg>
<span class="t" style="left:51.00px;top:451.53px;font-size:8.88px;line-height:8.88px;font-weight:400;color:#2b2b2b;font-family:'Liberation Sans';transform:scaleX(0.8975);transform-origin:0 0;">IMD Frequency Sweep ( SMPTE )</span>
<svg style="left:19px;top:464.1525px" width="5" height="6" viewBox="0 0 5 6"><path d="M0.5 0.5 L4.5 3 L0.5 5.5Z" fill="#111"/></svg>
<svg style="left:28px;top:462.6525px" width="8.6" height="8.6" viewBox="0 0 9 9"><rect x="0" y="0" width="9" height="9" fill="#3b6a7f"/><path d="M2 4.8 L3.7 6.5 L7.1 2.4" fill="none" stroke="#fff" stroke-width="1.35"/></svg>
<svg style="left:38.5px;top:462.6525px" width="11" height="9.5" viewBox="0 0 11 9.5"><path d="M0.6 0.4 H6.6 Q7.3 0.4 7.3 1.1 V1.9 H0.6Z" fill="#56686e"/><path d="M0.4 2.6 H10.7 L9.3 8.9 H0.4Z" fill="#a3b2b6"/><path d="M1.05 2.8 V8.8" stroke="#2c3c42" stroke-width="1.3"/><path d="M10.2 3 L8.9 8.7" stroke="#2c3c42" stroke-width="1.1"/><path d="M0.6 8.6 H9.2" stroke="#56676c" stroke-width="0.7"/></svg>
<span class="t" style="left:51.00px;top:464.23px;font-size:8.88px;line-height:8.88px;font-weight:400;color:#2b2b2b;font-family:'Liberation Sans';transform:scaleX(0.8901);transform-origin:0 0;">IMD Level Sweep ( CCIF )</span>
<svg style="left:19px;top:476.81749999999994px" width="5" height="6" viewBox="0 0 5 6"><path d="M0.5 0.5 L4.5 3 L0.5 5.5Z" fill="#111"/></svg>
<svg style="left:28px;top:475.31749999999994px" width="8.6" height="8.6" viewBox="0 0 9 9"><rect x="0" y="0" width="9" height="9" fill="#3b6a7f"/><path d="M2 4.8 L3.7 6.5 L7.1 2.4" fill="none" stroke="#fff" stroke-width="1.35"/></svg>
<svg style="left:38.5px;top:475.31749999999994px" width="11" height="9.5" viewBox="0 0 11 9.5"><path d="M0.6 0.4 H6.6 Q7.3 0.4 7.3 1.1 V1.9 H0.6Z" fill="#56686e"/><path d="M0.4 2.6 H10.7 L9.3 8.9 H0.4Z" fill="#a3b2b6"/><path d="M1.05 2.8 V8.8" stroke="#2c3c42" stroke-width="1.3"/><path d="M10.2 3 L8.9 8.7" stroke="#2c3c42" stroke-width="1.1"/><path d="M0.6 8.6 H9.2" stroke="#56676c" stroke-width="0.7"/></svg>
<span class="t" style="left:51.00px;top:476.93px;font-size:8.88px;line-height:8.88px;font-weight:400;color:#2b2b2b;font-family:'Liberation Sans';transform:scaleX(0.8868);transform-origin:0 0;">IMD Level Sweep ( SMPTE )</span>
<div style="left:0px;top:500.8px;width:197px;height:23.2px;background:#406b7c"></div>
<div style="left:95.0px;top:501.5px;width:1.6px;height:1.6px;background:#b9cdd5;border-radius:1px"></div>
<div style="left:98.2px;top:501.5px;width:1.6px;height:1.6px;background:#b9cdd5;border-radius:1px"></div>
<div style="left:101.4px;top:501.5px;width:1.6px;height:1.6px;background:#b9cdd5;border-radius:1px"></div>
<span class="t" style="left:3.50px;top:508.75px;font-size:11.75px;line-height:11.75px;font-weight:700;color:#f4f8fa;font-family:'Liberation Sans';transform:scaleX(0.9862);transform-origin:0 0;">Monitors/Meters</span>
<svg style="left:182.5px;top:508px" width="11" height="11" viewBox="0 0 11 11"><path d="M4.5 1.2 H1.2 V9.8 H9.8 V6.5" fill="none" stroke="#eef3f5" stroke-width="1.3"/><path d="M4.8 6.2 L9.5 1.5 M6 1.2 H9.8 V5" fill="none" stroke="#eef3f5" stroke-width="1.3"/></svg>
<div style="left:0px;top:524px;width:197px;height:18px;background:#d5e0e2"></div>
<div style="left:0px;top:524px;width:16px;height:16.5px;background:#a9d0e6"></div>
<svg style="left:2px;top:527px" width="11" height="11" viewBox="0 0 11 11"><rect width="11" height="11" fill="#1f4756"/><path d="M0.8 6.5 Q3 2 5.5 5.5 T10.5 5" fill="none" stroke="#dfe9ec" stroke-width="0.9"/></svg>
<svg style="left:18.5px;top:527px" width="11" height="11" viewBox="0 0 11 11"><rect width="11" height="11" fill="#1f4756"/><path d="M2 10 H10 M4.5 10 V2 M5.5 10 L6.5 7 L7.5 10" fill="none" stroke="#dfe9ec" stroke-width="0.8"/></svg>
<svg style="left:34.5px;top:527px" width="11" height="11" viewBox="0 0 11 11"><rect width="11" height="11" fill="#1f4756"/><path d="M2 3 H9 M2 3 L4 1.5 M2 3 L4 4.5" stroke="#fff" stroke-width="0.9" fill="none"/><path d="M2 7 H9 M3 9 V6 M5 9 V7 M7 9 V6" stroke="#dfe9ec" stroke-width="0.8"/></svg>
<svg style="left:50.5px;top:527px" width="11" height="11" viewBox="0 0 11 11"><rect width="11" height="11" fill="#1f4756"/><path d="M1 8 H2.5 V3 H4.5 V8 H6 V3 H8 V8 H10" fill="none" stroke="#dfe9ec" stroke-width="0.9"/></svg>
<svg style="left:67px;top:527px" width="11" height="11" viewBox="0 0 11 11"><rect width="11" height="11" fill="#1f4756"/><path d="M0.8 7 Q2.5 3 4.5 6 T9 6" fill="none" stroke="#dfe9ec" stroke-width="0.9"/><path d="M8 0.8 V4.2 M6.3 2.5 H9.7" stroke="#fff" stroke-width="1"/></svg>
<svg style="left:83px;top:527px" width="11" height="11" viewBox="0 0 11 11"><rect width="11" height="11" fill="#1f4756"/><rect x="3" y="2" width="5" height="1.2" fill="#dfe9ec"/><rect x="3" y="4" width="5" height="1.2" fill="#dfe9ec"/><rect x="3" y="6" width="5" height="1.2" fill="#dfe9ec"/><rect x="3" y="8" width="5" height="1.2" fill="#dfe9ec"/></svg>
<div style="left:99px;top:526px;width:0.8px;height:14px;background:#bcc9cd"></div>
<div style="left:103px;top:526.8px;width:30.5px;height:11px;background:linear-gradient(#74ea74,#36c236);border:1px solid #2aa02a;border-radius:2px"></div>
<span class="t" style="left:106.50px;top:529.00px;font-size:7.92px;line-height:7.92px;font-weight:700;color:#0d4a0d;font-family:'Liberation Sans';transform:scaleX(1.0119);transform-origin:0 0;">ON</span>
<div style="left:121.5px;top:528.8px;width:10px;height:7px;background:linear-gradient(#5fd35f,#1f8f1f);border:0.6px solid #1f7a1f;border-radius:1px"></div>
<div style="left:3px;top:543.5px;width:190.5px;height:154px;background:#fff"></div>
<span class="t" style="left:97.30px;top:544.92px;font-size:8.13px;line-height:8.13px;font-weight:400;color:#222;font-family:'Liberation Mono';transform:scaleX(0.9020);transform-origin:0 0;">Scope</span>
<svg style="left:41.3px;top:554.4px" width="134.0" height="120.60000000000002" viewBox="0 0 134.0 120.60000000000002"><path d="M13.4 0 V120.6" stroke="#ececec" stroke-width="0.8"/><path d="M40.3 0 V120.6" stroke="#ececec" stroke-width="0.8"/><path d="M67.6 0 V120.6" stroke="#ececec" stroke-width="0.8"/><path d="M94.3 0 V120.6" stroke="#ececec" stroke-width="0.8"/><path d="M120.7 0 V120.6" stroke="#ececec" stroke-width="0.8"/><path d="M26.6 0 V120.6" stroke="#d9d9d9" stroke-width="0.9"/><path d="M53.3 0 V120.6" stroke="#d9d9d9" stroke-width="0.9"/><path d="M80.7 0 V120.6" stroke="#d9d9d9" stroke-width="0.9"/><path d="M107.1 0 V120.6" stroke="#d9d9d9" stroke-width="0.9"/><path d="M0 18.9 H134.0" stroke="#ececec" stroke-width="0.8"/><path d="M0 46.4 H134.0" stroke="#ececec" stroke-width="0.8"/><path d="M0 73.9 H134.0" stroke="#ececec" stroke-width="0.8"/><path d="M0 101.4 H134.0" stroke="#ececec" stroke-width="0.8"/><path d="M0 5.4 H134.0" stroke="#d9d9d9" stroke-width="0.9"/><path d="M0 32.9 H134.0" stroke="#d9d9d9" stroke-width="0.9"/><path d="M0 60.1 H134.0" stroke="#d9d9d9" stroke-width="0.9"/><path d="M0 87.8 H134.0" stroke="#d9d9d9" stroke-width="0.9"/><path d="M0 115.2 H134.0" stroke="#d9d9d9" stroke-width="0.9"/><path d="M0.00 60.52 L0.13 65.63 L0.27 72.88 L0.40 58.94 L0.54 65.09 L0.67 59.96 L0.80 58.48 L0.94 58.16 L1.07 52.90 L1.21 46.87 L1.34 68.80 L1.48 61.82 L1.61 65.17 L1.74 55.27 L1.88 61.61 L2.01 55.54 L2.15 62.06 L2.28 61.48 L2.41 54.38 L2.55 62.53 L2.68 57.00 L2.82 62.80 L2.95 65.62 L3.09 56.31 L3.22 66.69 L3.35 59.73 L3.49 69.46 L3.62 57.99 L3.76 62.12 L3.89 68.20 L4.02 68.10 L4.16 45.71 L4.29 62.26 L4.43 63.10 L4.56 75.98 L4.69 61.77 L4.83 49.25 L4.96 63.29 L5.10 62.98 L5.23 60.67 L5.37 60.82 L5.50 61.18 L5.63 69.21 L5.77 57.68 L5.90 53.79 L6.04 59.30 L6.17 52.44 L6.30 52.90 L6.44 59.50 L6.57 56.90 L6.71 80.62 L6.84 59.36 L6.97 55.89 L7.11 64.23 L7.24 58.06 L7.38 63.69 L7.51 59.17 L7.65 65.15 L7.78 64.31 L7.91 60.67 L8.05 57.88 L8.18 58.45 L8.32 62.03 L8.45 57.22 L8.58 64.65 L8.72 49.22 L8.85 53.66 L8.99 60.10 L9.12 57.30 L9.26 54.34 L9.39 66.40 L9.52 58.02 L9.66 61.85 L9.79 59.66 L9.93 56.90 L10.06 46.72 L10.19 63.08 L10.33 55.14 L10.46 60.98 L10.60 58.45 L10.73 55.39 L10.86 62.64 L11.00 57.66 L11.13 71.79 L11.27 70.70 L11.40 60.41 L11.54 50.17 L11.67 64.44 L11.80 59.86 L11.94 51.68 L12.07 59.12 L12.21 71.40 L12.34 60.14 L12.47 61.28 L12.61 63.02 L12.74 78.05 L12.88 61.86 L13.01 63.39 L13.15 51.13 L13.28 65.50 L13.41 59.96 L13.55 68.90 L13.68 58.35 L13.82 62.45 L13.95 63.82 L14.08 67.00 L14.22 60.34 L14.35 59.61 L14.49 63.45 L14.62 61.19 L14.75 55.67 L14.89 41.84 L15.02 61.46 L15.16 44.60 L15.29 77.00 L15.43 60.26 L15.56 58.25 L15.69 62.31 L15.83 53.50 L15.96 49.61 L16.10 53.88 L16.23 61.66 L16.36 78.20 L16.50 62.59 L16.63 44.38 L16.77 58.68 L16.90 64.29 L17.04 62.12 L17.17 64.05 L17.30 58.44 L17.44 59.72 L17.57 65.03 L17.71 55.26 L17.84 52.22 L17.97 59.52 L18.11 54.43 L18.24 62.56 L18.38 44.08 L18.51 57.78 L18.64 56.48 L18.78 60.70 L18.91 59.30 L19.05 58.90 L19.18 48.94 L19.32 79.36 L19.45 49.77 L19.58 74.11 L19.72 67.50 L19.85 56.84 L19.99 50.04 L20.12 65.33 L20.25 57.98 L20.39 61.04 L20.52 70.25 L20.66 55.16 L20.79 63.01 L20.92 59.08 L21.06 57.73 L21.19 62.81 L21.33 64.53 L21.46 65.70 L21.60 58.31 L21.73 60.13 L21.86 57.61 L22.00 63.37 L22.13 55.68 L22.27 63.76 L22.40 55.40 L22.53 63.01 L22.67 57.67 L22.80 61.85 L22.94 65.57 L23.07 63.12 L23.21 56.62 L23.34 61.70 L23.47 65.71 L23.61 78.45 L23.74 62.51 L23.88 69.43 L24.01 62.86 L24.14 60.39 L24.28 58.45 L24.41 66.00 L24.55 55.23 L24.68 59.55 L24.81 59.02 L24.95 62.80 L25.08 60.89 L25.22 62.66 L25.35 76.29 L25.49 59.87 L25.62 59.64 L25.75 57.07 L25.89 60.37 L26.02 55.80 L26.16 63.61 L26.29 59.00 L26.42 58.24 L26.56 68.74 L26.69 66.13 L26.83 60.27 L26.96 56.40 L27.10 61.30 L27.23 56.84 L27.36 57.54 L27.50 55.25 L27.63 55.88 L27.77 65.74 L27.90 62.74 L28.03 65.90 L28.17 65.07 L28.30 55.98 L28.44 62.60 L28.57 63.18 L28.70 54.09 L28.84 57.94 L28.97 60.84 L29.11 61.59 L29.24 53.11 L29.38 58.16 L29.51 72.76 L29.64 66.11 L29.78 57.68 L29.91 63.26 L30.05 60.66 L30.18 56.01 L30.31 59.84 L30.45 62.11 L30.58 59.70 L30.72 57.30 L30.85 59.76 L30.98 51.97 L31.12 62.80 L31.25 63.65 L31.39 57.40 L31.52 58.86 L31.66 67.94 L31.79 61.60 L31.92 55.93 L32.06 63.86 L32.19 66.77 L32.33 59.13 L32.46 54.13 L32.59 44.85 L32.73 55.24 L32.86 59.37 L33.00 65.17 L33.13 61.30 L33.27 49.86 L33.40 55.59 L33.53 76.70 L33.67 54.13 L33.80 59.24 L33.94 60.11 L34.07 42.47 L34.20 65.76 L34.34 55.65 L34.47 66.77 L34.61 53.23 L34.74 62.97 L34.87 61.82 L35.01 60.57 L35.14 53.24 L35.28 60.22 L35.41 57.87 L35.55 57.06 L35.68 57.83 L35.81 61.72 L35.95 57.24 L36.08 63.26 L36.22 60.15 L36.35 60.42 L36.48 63.15 L36.62 63.95 L36.75 62.25 L36.89 43.61 L37.02 57.45 L37.16 61.10 L37.29 59.63 L37.42 61.14 L37.56 65.10 L37.69 61.36 L37.83 60.33 L37.96 64.49 L38.09 67.38 L38.23 66.61 L38.36 56.93 L38.50 72.17 L38.63 65.08 L38.76 76.81 L38.90 59.00 L39.03 61.73 L39.17 49.87 L39.30 59.89 L39.44 57.25 L39.57 60.43 L39.70 66.12 L39.84 55.72 L39.97 56.24 L40.11 65.31 L40.24 57.10 L40.37 56.84 L40.51 55.60 L40.64 62.84 L40.78 60.90 L40.91 55.68 L41.05 52.24 L41.18 66.95 L41.31 61.62 L41.45 55.59 L41.58 55.48 L41.72 66.88 L41.85 65.99 L41.98 42.52 L42.12 65.01 L42.25 60.81 L42.39 62.77 L42.52 61.97 L42.65 66.59 L42.79 53.89 L42.92 59.67 L43.06 78.49 L43.19 63.57 L43.33 58.07 L43.46 61.43 L43.59 57.36 L43.73 62.36 L43.86 59.13 L44.00 59.39 L44.13 63.04 L44.26 50.46 L44.40 59.80 L44.53 61.10 L44.67 43.72 L44.80 61.39 L44.93 58.51 L45.07 63.56 L45.20 62.93 L45.34 64.05 L45.47 63.32 L45.61 54.77 L45.74 63.83 L45.87 64.61 L46.01 58.48 L46.14 63.83 L46.28 60.28 L46.41 62.74 L46.54 67.02 L46.68 47.42 L46.81 65.92 L46.95 63.10 L47.08 61.34 L47.22 56.83 L47.35 66.70 L47.48 65.22 L47.62 55.02 L47.75 62.65 L47.89 56.71 L48.02 52.21 L48.15 65.16 L48.29 59.09 L48.42 49.77 L48.56 70.56 L48.69 64.35 L48.82 59.33 L48.96 64.75 L49.09 60.03 L49.23 56.46 L49.36 58.59 L49.50 61.04 L49.63 56.39 L49.76 48.57 L49.90 58.27 L50.03 61.98 L50.17 54.64 L50.30 59.20 L50.43 59.02 L50.57 64.92 L50.70 59.13 L50.84 43.39 L50.97 60.64 L51.11 73.90 L51.24 64.20 L51.37 59.20 L51.51 60.35 L51.64 63.65 L51.78 53.67 L51.91 55.21 L52.04 57.65 L52.18 55.51 L52.31 61.30 L52.45 60.32 L52.58 60.51 L52.71 54.42 L52.85 62.58 L52.98 56.27 L53.12 76.96 L53.25 60.70 L53.39 64.23 L53.52 57.34 L53.65 62.45 L53.79 54.57 L53.92 61.44 L54.06 62.57 L54.19 55.76 L54.32 58.78 L54.46 61.69 L54.59 55.51 L54.73 57.97 L54.86 65.04 L54.99 64.90 L55.13 44.89 L55.26 58.80 L55.40 66.93 L55.53 58.02 L55.67 56.38 L55.80 66.26 L55.93 58.53 L56.07 61.92 L56.20 64.05 L56.34 58.68 L56.47 70.84 L56.60 57.29 L56.74 62.35 L56.87 61.88 L57.01 59.88 L57.14 64.85 L57.28 62.69 L57.41 80.48 L57.54 54.11 L57.68 48.55 L57.81 65.43 L57.95 57.55 L58.08 59.10 L58.21 64.17 L58.35 65.69 L58.48 59.64 L58.62 60.45 L58.75 57.43 L58.88 57.37 L59.02 63.36 L59.15 64.40 L59.29 60.95 L59.42 48.68 L59.56 61.51 L59.69 61.92 L59.82 62.66 L59.96 61.44 L60.09 63.40 L60.23 59.68 L60.36 53.23 L60.49 75.77 L60.63 63.01 L60.76 56.30 L60.90 59.24 L61.03 62.46 L61.17 60.25 L61.30 56.40 L61.43 57.36 L61.57 68.41 L61.70 61.35 L61.84 48.85 L61.97 69.00 L62.10 60.88 L62.24 57.97 L62.37 55.14 L62.51 55.48 L62.64 58.90 L62.77 57.77 L62.91 64.81 L63.04 56.32 L63.18 64.76 L63.31 65.54 L63.45 53.70 L63.58 59.82 L63.71 62.35 L63.85 56.65 L63.98 65.46 L64.12 55.27 L64.25 61.57 L64.38 65.51 L64.52 59.64 L64.65 64.32 L64.79 62.06 L64.92 68.19 L65.06 63.27 L65.19 58.04 L65.32 62.39 L65.46 52.02 L65.59 63.83 L65.73 58.46 L65.86 65.09 L65.99 54.87 L66.13 52.74 L66.26 60.90 L66.40 64.28 L66.53 63.49 L66.66 75.80 L66.80 59.44 L66.93 51.82 L67.07 53.85 L67.20 62.51 L67.34 56.47 L67.47 63.58 L67.60 63.14 L67.74 41.62 L67.87 56.29 L68.01 63.55 L68.14 62.00 L68.27 62.40 L68.41 63.64 L68.54 58.94 L68.68 70.83 L68.81 79.82 L68.94 58.77 L69.08 58.65 L69.21 62.43 L69.35 57.95 L69.48 61.49 L69.62 59.72 L69.75 56.83 L69.88 59.92 L70.02 63.65 L70.15 52.65 L70.29 57.38 L70.42 64.16 L70.55 56.47 L70.69 58.30 L70.82 56.58 L70.96 64.12 L71.09 54.00 L71.23 56.51 L71.36 58.53 L71.49 51.50 L71.63 61.81 L71.76 57.86 L71.90 64.80 L72.03 57.82 L72.16 60.22 L72.30 56.16 L72.43 57.09 L72.57 53.61 L72.70 60.70 L72.83 77.91 L72.97 61.09 L73.10 63.73 L73.24 57.09 L73.37 60.42 L73.51 60.84 L73.64 66.78 L73.77 57.64 L73.91 61.36 L74.04 64.93 L74.18 47.22 L74.31 65.51 L74.44 56.10 L74.58 64.16 L74.71 59.74 L74.85 63.14 L74.98 66.44 L75.12 58.27 L75.25 59.04 L75.38 54.64 L75.52 60.87 L75.65 54.26 L75.79 60.37 L75.92 66.33 L76.05 64.25 L76.19 67.26 L76.32 54.33 L76.46 63.88 L76.59 74.62 L76.72 58.18 L76.86 62.14 L76.99 63.62 L77.13 54.06 L77.26 64.50 L77.40 57.51 L77.53 64.80 L77.66 57.03 L77.80 54.70 L77.93 55.83 L78.07 64.21 L78.20 63.92 L78.33 56.49 L78.47 58.75 L78.60 58.81 L78.74 57.17 L78.87 63.38 L79.01 62.82 L79.14 58.65 L79.27 56.95 L79.41 58.44 L79.54 57.21 L79.68 58.94 L79.81 61.85 L79.94 71.15 L80.08 66.48 L80.21 72.99 L80.35 57.94 L80.48 53.88 L80.61 66.53 L80.75 58.30 L80.88 55.78 L81.02 54.45 L81.15 45.49 L81.29 67.93 L81.42 60.17 L81.55 61.91 L81.69 66.71 L81.82 56.15 L81.96 55.99 L82.09 62.39 L82.22 77.97 L82.36 63.38 L82.49 64.57 L82.63 61.37 L82.76 62.14 L82.89 77.65 L83.03 60.50 L83.16 57.62 L83.30 56.01 L83.43 66.17 L83.57 75.63 L83.70 54.56 L83.83 70.51 L83.97 53.98 L84.10 65.26 L84.24 58.64 L84.37 62.90 L84.50 58.30 L84.64 62.74 L84.77 57.78 L84.91 65.39 L85.04 72.50 L85.18 61.06 L85.31 53.79 L85.44 59.68 L85.58 62.53 L85.71 58.29 L85.85 60.96 L85.98 57.47 L86.11 57.87 L86.25 70.33 L86.38 56.33 L86.52 59.64 L86.65 44.98 L86.78 59.50 L86.92 76.73 L87.05 79.75 L87.19 66.44 L87.32 62.07 L87.46 58.92 L87.59 63.69 L87.72 47.55 L87.86 66.13 L87.99 54.39 L88.13 64.73 L88.26 65.89 L88.39 69.82 L88.53 54.93 L88.66 59.74 L88.80 65.73 L88.93 63.47 L89.07 56.39 L89.20 61.74 L89.33 53.86 L89.47 60.84 L89.60 60.65 L89.74 62.03 L89.87 53.60 L90.00 63.63 L90.14 72.69 L90.27 46.77 L90.41 62.37 L90.54 61.70 L90.67 64.35 L90.81 56.29 L90.94 67.06 L91.08 61.89 L91.21 59.56 L91.35 56.61 L91.48 62.09 L91.61 65.80 L91.75 66.10 L91.88 64.68 L92.02 55.39 L92.15 60.01 L92.28 55.84 L92.42 54.53 L92.55 66.25 L92.69 55.08 L92.82 65.06 L92.95 65.94 L93.09 51.22 L93.22 54.09 L93.36 64.03 L93.49 57.47 L93.63 62.33 L93.76 56.04 L93.89 73.50 L94.03 58.62 L94.16 72.72 L94.30 59.56 L94.43 63.05 L94.56 58.88 L94.70 59.09 L94.83 63.01 L94.97 55.87 L95.10 63.24 L95.24 66.87 L95.37 73.78 L95.50 59.07 L95.64 64.03 L95.77 54.66 L95.91 54.63 L96.04 55.76 L96.17 59.18 L96.31 55.32 L96.44 59.31 L96.58 64.03 L96.71 62.55 L96.84 62.24 L96.98 52.72 L97.11 58.34 L97.25 58.68 L97.38 76.58 L97.52 76.03 L97.65 64.84 L97.78 60.70 L97.92 60.19 L98.05 60.26 L98.19 62.27 L98.32 57.27 L98.45 55.24 L98.59 61.32 L98.72 63.72 L98.86 58.50 L98.99 61.83 L99.13 60.21 L99.26 53.73 L99.39 58.82 L99.53 63.83 L99.66 41.09 L99.80 71.88 L99.93 51.47 L100.06 56.00 L100.20 77.32 L100.33 43.00 L100.47 56.16 L100.60 61.56 L100.73 61.22 L100.87 64.64 L101.00 61.56 L101.14 59.45 L101.27 56.22 L101.41 58.81 L101.54 63.78 L101.67 71.49 L101.81 54.01 L101.94 55.04 L102.08 61.92 L102.21 59.05 L102.34 52.23 L102.48 60.36 L102.61 62.74 L102.75 55.97 L102.88 63.52 L103.02 56.21 L103.15 66.56 L103.28 69.18 L103.42 64.63 L103.55 50.87 L103.69 66.40 L103.82 63.42 L103.95 62.53 L104.09 66.16 L104.22 58.01 L104.36 55.18 L104.49 56.44 L104.62 51.76 L104.76 60.56 L104.89 78.44 L105.03 68.31 L105.16 64.55 L105.30 67.56 L105.43 62.98 L105.56 58.20 L105.70 57.80 L105.83 57.79 L105.97 58.15 L106.10 62.23 L106.23 58.39 L106.37 63.44 L106.50 55.04 L106.64 54.25 L106.77 56.59 L106.90 58.59 L107.04 46.38 L107.17 45.04 L107.31 58.85 L107.44 62.50 L107.58 54.88 L107.71 42.86 L107.84 57.69 L107.98 65.32 L108.11 60.98 L108.25 56.10 L108.38 57.93 L108.51 56.15 L108.65 66.42 L108.78 74.58 L108.92 59.73 L109.05 60.52 L109.19 58.99 L109.32 60.83 L109.45 60.10 L109.59 61.88 L109.72 62.73 L109.86 59.09 L109.99 59.33 L110.12 60.57 L110.26 63.26 L110.39 59.47 L110.53 58.84 L110.66 56.68 L110.79 59.82 L110.93 56.80 L111.06 65.94 L111.20 66.93 L111.33 52.01 L111.47 58.60 L111.60 60.13 L111.73 55.59 L111.87 58.35 L112.00 59.24 L112.14 64.64 L112.27 55.42 L112.40 59.60 L112.54 68.57 L112.67 55.44 L112.81 54.06 L112.94 71.57 L113.08 65.98 L113.21 62.21 L113.34 53.28 L113.48 53.52 L113.61 64.99 L113.75 61.03 L113.88 69.00 L114.01 61.91 L114.15 58.82 L114.28 60.94 L114.42 59.87 L114.55 66.45 L114.68 51.13 L114.82 63.64 L114.95 58.65 L115.09 66.69 L115.22 67.30 L115.36 60.89 L115.49 53.54 L115.62 57.47 L115.76 54.84 L115.89 61.53 L116.03 63.99 L116.16 64.00 L116.29 56.00 L116.43 56.57 L116.56 62.97 L116.70 52.63 L116.83 55.63 L116.96 58.12 L117.10 55.78 L117.23 63.04 L117.37 61.45 L117.50 57.96 L117.64 57.54 L117.77 48.50 L117.90 59.05 L118.04 58.91 L118.17 58.37 L118.31 63.90 L118.44 41.36 L118.57 62.16 L118.71 67.59 L118.84 66.71 L118.98 62.07 L119.11 61.56 L119.25 70.90 L119.38 53.63 L119.51 60.67 L119.65 55.62 L119.78 60.53 L119.92 60.55 L120.05 63.81 L120.18 58.44 L120.32 58.08 L120.45 60.51 L120.59 56.88 L120.72 67.46 L120.85 68.35 L120.99 61.78 L121.12 49.84 L121.26 56.85 L121.39 60.06 L121.53 55.85 L121.66 55.81 L121.79 64.09 L121.93 56.43 L122.06 66.27 L122.20 71.34 L122.33 60.55 L122.46 70.45 L122.60 63.30 L122.73 59.48 L122.87 64.88 L123.00 58.69 L123.14 61.16 L123.27 58.26 L123.40 69.85 L123.54 71.40 L123.67 64.46 L123.81 54.96 L123.94 70.35 L124.07 60.54 L124.21 63.96 L124.34 61.36 L124.48 59.12 L124.61 58.76 L124.74 60.02 L124.88 44.87 L125.01 58.18 L125.15 77.38 L125.28 61.90 L125.42 65.13 L125.55 54.91 L125.68 51.92 L125.82 64.38 L125.95 65.51 L126.09 62.82 L126.22 60.14 L126.35 58.47 L126.49 54.41 L126.62 48.22 L126.76 55.21 L126.89 57.80 L127.03 66.69 L127.16 61.41 L127.29 58.86 L127.43 59.80 L127.56 65.04 L127.70 63.75 L127.83 54.16 L127.96 63.46 L128.10 62.82 L128.23 57.94 L128.37 67.00 L128.50 60.51 L128.63 58.42 L128.77 64.97 L128.90 61.44 L129.04 52.88 L129.17 67.30 L129.31 71.35 L129.44 60.44 L129.57 63.11 L129.71 66.27 L129.84 58.27 L129.98 56.40 L130.11 61.76 L130.24 54.10 L130.38 56.03 L130.51 55.15 L130.65 60.13 L130.78 57.11 L130.91 63.39 L131.05 76.30 L131.18 46.86 L131.32 62.74 L131.45 62.02 L131.59 58.66 L131.72 47.44 L131.85 73.45 L131.99 60.43 L132.12 45.02 L132.26 62.24 L132.39 57.58 L132.52 56.34 L132.66 68.64 L132.79 59.08 L132.93 61.87 L133.06 58.59 L133.20 62.41 L133.33 63.94 L133.46 64.22 L133.60 55.65 L133.73 60.03 L133.87 64.64 L134.00 56.66" fill="none" stroke="#3f5b9a" stroke-width="0.5" opacity="0.85"/><path d="M0.00 54.88 L0.10 55.02 L0.21 78.37 L0.31 50.12 L0.41 62.55 L0.52 60.93 L0.62 58.60 L0.72 61.50 L0.83 57.75 L0.93 61.63 L1.03 60.23 L1.13 58.40 L1.24 39.87 L1.34 68.85 L1.44 62.02 L1.55 63.42 L1.65 58.13 L1.75 58.11 L1.86 71.89 L1.96 59.15 L2.06 63.54 L2.17 70.83 L2.27 57.77 L2.37 63.08 L2.48 57.39 L2.58 60.57 L2.68 64.05 L2.79 58.79 L2.89 56.35 L2.99 62.20 L3.09 58.48 L3.20 54.13 L3.30 60.30 L3.40 68.29 L3.51 62.73 L3.61 58.00 L3.71 60.92 L3.82 55.95 L3.92 63.10 L4.02 59.69 L4.13 62.22 L4.23 62.95 L4.33 58.62 L4.44 56.62 L4.54 59.41 L4.64 56.36 L4.75 65.34 L4.85 78.91 L4.95 41.56 L5.05 61.37 L5.16 63.43 L5.26 72.13 L5.36 63.74 L5.47 57.33 L5.57 64.41 L5.67 61.77 L5.78 58.14 L5.88 58.25 L5.98 58.65 L6.09 56.51 L6.19 61.86 L6.29 58.85 L6.40 64.57 L6.50 69.50 L6.60 54.78 L6.71 60.37 L6.81 67.37 L6.91 63.14 L7.01 63.79 L7.12 60.91 L7.22 61.87 L7.32 57.11 L7.43 63.99 L7.53 59.02 L7.63 52.57 L7.74 61.33 L7.84 58.84 L7.94 65.16 L8.05 59.49 L8.15 64.13 L8.25 62.50 L8.36 58.82 L8.46 57.47 L8.56 63.11 L8.67 61.43 L8.77 64.08 L8.87 65.90 L8.97 63.24 L9.08 65.01 L9.18 58.02 L9.28 51.70 L9.39 57.18 L9.49 62.07 L9.59 65.64 L9.70 60.26 L9.80 57.31 L9.90 62.74 L10.01 59.76 L10.11 65.08 L10.21 59.08 L10.32 47.54 L10.42 65.35 L10.52 64.61 L10.63 60.12 L10.73 66.36 L10.83 71.14 L10.93 56.23 L11.04 58.97 L11.14 62.02 L11.24 55.91 L11.35 58.43 L11.45 61.89 L11.55 71.29 L11.66 57.02 L11.76 60.25 L11.86 59.98 L11.97 58.27 L12.07 58.49 L12.17 56.76 L12.28 63.41 L12.38 64.36 L12.48 59.36 L12.59 57.27 L12.69 58.16 L12.79 56.75 L12.89 62.06 L13.00 58.96 L13.10 65.01 L13.20 56.64 L13.31 61.38 L13.41 65.54 L13.51 60.55 L13.62 60.76 L13.72 56.84 L13.82 63.78 L13.93 59.84 L14.03 56.41 L14.13 55.34 L14.24 60.34 L14.34 56.37 L14.44 58.52 L14.55 65.30 L14.65 76.01 L14.75 54.19 L14.85 65.36 L14.96 64.32 L15.06 62.20 L15.16 54.54 L15.27 54.90 L15.37 53.05 L15.47 57.19 L15.58 53.67 L15.68 76.31 L15.78 56.34 L15.89 56.34 L15.99 60.76 L16.09 69.20 L16.20 52.45 L16.30 58.75 L16.40 59.74 L16.51 61.47 L16.61 60.91 L16.71 58.59 L16.81 60.82 L16.92 61.71 L17.02 61.68 L17.12 67.29 L17.23 66.14 L17.33 57.50 L17.43 61.17 L17.54 62.89 L17.64 61.36 L17.74 60.00 L17.85 56.52 L17.95 46.73 L18.05 63.78 L18.16 49.67 L18.26 71.73 L18.36 56.54 L18.46 56.24 L18.57 57.59 L18.67 57.72 L18.77 60.12 L18.88 54.76 L18.98 55.11 L19.08 65.33 L19.19 59.05 L19.29 58.55 L19.39 64.31 L19.50 64.30 L19.60 56.22 L19.70 70.70 L19.81 66.47 L19.91 68.96 L20.01 68.95 L20.12 68.01 L20.22 64.06 L20.32 64.87 L20.42 57.05 L20.53 65.39 L20.63 65.56 L20.73 66.41 L20.84 52.20 L20.94 63.61 L21.04 53.59 L21.15 56.87 L21.25 77.15 L21.35 60.72 L21.46 56.75 L21.56 61.76 L21.66 57.91 L21.77 64.51 L21.87 68.15 L21.97 63.96 L22.08 58.07 L22.18 59.41 L22.28 59.56 L22.38 59.09 L22.49 42.91 L22.59 56.24 L22.69 62.19 L22.80 59.35 L22.90 56.83 L23.00 53.74 L23.11 79.81 L23.21 60.60 L23.31 58.91 L23.42 71.86 L23.52 60.49 L23.62 66.70 L23.73 45.26 L23.83 65.19 L23.93 60.66 L24.04 61.11 L24.14 50.49 L24.24 55.93 L24.34 60.74 L24.45 58.26 L24.55 56.90 L24.65 74.87 L24.76 54.37 L24.86 53.13 L24.96 57.98 L25.07 54.13 L25.17 67.12 L25.27 56.63 L25.38 61.02 L25.48 61.59 L25.58 56.22 L25.69 61.60 L25.79 77.44 L25.89 59.77 L26.00 65.73 L26.10 60.09 L26.20 60.75 L26.30 56.70 L26.41 55.23 L26.51 58.96 L26.61 66.52 L26.72 58.78 L26.82 60.15 L26.92 67.00 L27.03 61.39 L27.13 58.97 L27.23 60.11 L27.34 60.05 L27.44 60.82 L27.54 60.88 L27.65 72.97 L27.75 59.26 L27.85 48.61 L27.96 61.67 L28.06 59.58 L28.16 61.14 L28.26 62.32 L28.37 60.49 L28.47 56.95 L28.57 71.46 L28.68 61.36 L28.78 64.07 L28.88 66.65 L28.99 70.89 L29.09 58.42 L29.19 58.29 L29.30 56.50 L29.40 61.81 L29.50 44.41 L29.61 58.56 L29.71 58.40 L29.81 58.93 L29.92 44.95 L30.02 64.05 L30.12 57.69 L30.22 62.02 L30.33 56.26 L30.43 58.51 L30.53 58.11 L30.64 62.78 L30.74 63.70 L30.84 55.13 L30.95 45.85 L31.05 55.63 L31.15 58.14 L31.26 69.87 L31.36 55.16 L31.46 60.81 L31.57 62.23 L31.67 66.52 L31.77 43.59 L31.88 54.52 L31.98 54.54 L32.08 60.06 L32.18 61.46 L32.29 54.44 L32.39 62.41 L32.49 61.03 L32.60 67.63 L32.70 61.06 L32.80 67.62 L32.91 61.40 L33.01 64.36 L33.11 49.31 L33.22 60.24 L33.32 53.51 L33.42 56.88 L33.53 52.29 L33.63 61.47 L33.73 65.26 L33.84 65.58 L33.94 74.14 L34.04 60.13 L34.14 54.68 L34.25 58.40 L34.35 63.63 L34.45 55.30 L34.56 48.34 L34.66 57.95 L34.76 49.26 L34.87 57.68 L34.97 61.57 L35.07 55.67 L35.18 55.59 L35.28 60.71 L35.38 65.15 L35.49 58.48 L35.59 61.01 L35.69 57.88 L35.80 61.29 L35.90 55.75 L36.00 58.27 L36.10 71.59 L36.21 56.24 L36.31 62.67 L36.41 61.37 L36.52 67.74 L36.62 54.69 L36.72 60.23 L36.83 59.89 L36.93 57.93 L37.03 63.74 L37.14 56.46 L37.24 61.51 L37.34 64.48 L37.45 56.64 L37.55 63.00 L37.65 57.03 L37.76 58.87 L37.86 62.54 L37.96 60.42 L38.06 56.79 L38.17 72.50 L38.27 60.54 L38.37 64.43 L38.48 60.19 L38.58 49.69 L38.68 80.74 L38.79 60.12 L38.89 57.18 L38.99 65.37 L39.10 56.56 L39.20 63.59 L39.30 70.67 L39.41 57.23 L39.51 80.40 L39.61 55.65 L39.72 58.55 L39.82 62.14 L39.92 57.48 L40.02 67.17 L40.13 64.20 L40.23 65.74 L40.33 60.86 L40.44 70.50 L40.54 65.68 L40.64 65.44 L40.75 60.51 L40.85 45.90 L40.95 55.87 L41.06 54.66 L41.16 62.47 L41.26 78.76 L41.37 59.20 L41.47 40.60 L41.57 64.00 L41.68 60.99 L41.78 55.55 L41.88 61.06 L41.98 64.63 L42.09 58.61 L42.19 66.49 L42.29 58.43 L42.40 60.56 L42.50 80.33 L42.60 58.17 L42.71 62.23 L42.81 62.56 L42.91 62.87 L43.02 60.65 L43.12 60.20 L43.22 55.83 L43.33 48.16 L43.43 58.72 L43.53 64.97 L43.64 64.18 L43.74 54.32 L43.84 60.92 L43.94 56.96 L44.05 58.65 L44.15 63.49 L44.25 45.62 L44.36 54.03 L44.46 49.66 L44.56 74.80 L44.67 62.79 L44.77 66.97 L44.87 66.84 L44.98 54.95 L45.08 57.14 L45.18 63.48 L45.29 55.24 L45.39 62.97 L45.49 61.14 L45.60 51.97 L45.70 59.41 L45.80 44.05 L45.90 48.83 L46.01 63.32 L46.11 57.27 L46.21 57.65 L46.32 60.35 L46.42 63.43 L46.52 60.62 L46.63 58.34 L46.73 54.44 L46.83 63.17 L46.94 55.01 L47.04 58.71 L47.14 61.89 L47.25 55.02 L47.35 71.38 L47.45 59.00 L47.56 54.12 L47.66 49.62 L47.76 59.42 L47.86 58.31 L47.97 65.19 L48.07 66.53 L48.17 58.29 L48.28 58.44 L48.38 64.67 L48.48 57.24 L48.59 65.91 L48.69 54.19 L48.79 51.29 L48.90 57.66 L49.00 60.76 L49.10 55.16 L49.21 62.14 L49.31 62.42 L49.41 58.73 L49.52 59.64 L49.62 60.78 L49.72 49.24 L49.82 59.92 L49.93 62.86 L50.03 64.98 L50.13 57.93 L50.24 58.14 L50.34 55.02 L50.44 59.58 L50.55 62.73 L50.65 53.86 L50.75 62.59 L50.86 57.47 L50.96 61.02 L51.06 54.64 L51.17 60.30 L51.27 58.08 L51.37 58.70 L51.47 63.51 L51.58 40.05 L51.68 60.99 L51.78 64.28 L51.89 56.91 L51.99 60.25 L52.09 61.12 L52.20 64.23 L52.30 63.42 L52.40 58.09 L52.51 60.54 L52.61 58.30 L52.71 59.67 L52.82 56.84 L52.92 61.45 L53.02 57.37 L53.13 61.43 L53.23 55.48 L53.33 64.34 L53.43 62.13 L53.54 73.38 L53.64 52.62 L53.74 57.52 L53.85 63.24 L53.95 65.48 L54.05 59.60 L54.16 58.15 L54.26 67.31 L54.36 57.77 L54.47 60.11 L54.57 66.45 L54.67 53.62 L54.78 61.59 L54.88 57.37 L54.98 68.89 L55.09 54.67 L55.19 76.92 L55.29 51.12 L55.39 60.74 L55.50 55.55 L55.60 67.93 L55.70 49.69 L55.81 66.29 L55.91 46.75 L56.01 52.96 L56.12 57.65 L56.22 56.17 L56.32 56.26 L56.43 66.17 L56.53 54.16 L56.63 54.91 L56.74 67.93 L56.84 60.16 L56.94 65.38 L57.05 61.57 L57.15 63.62 L57.25 71.55 L57.35 63.16 L57.46 54.46 L57.56 43.90 L57.66 63.61 L57.77 55.37 L57.87 59.99 L57.97 55.94 L58.08 64.38 L58.18 59.48 L58.28 58.65 L58.39 48.94 L58.49 61.31 L58.59 52.71 L58.70 63.11 L58.80 67.89 L58.90 61.32 L59.01 63.20 L59.11 54.84 L59.21 59.44 L59.31 59.50 L59.42 60.59 L59.52 61.66 L59.62 58.80 L59.73 70.75 L59.83 63.53 L59.93 68.38 L60.04 63.38 L60.14 62.97 L60.24 62.12 L60.35 58.63 L60.45 57.17 L60.55 59.64 L60.66 59.90 L60.76 62.03 L60.86 63.26 L60.97 52.48 L61.07 63.40 L61.17 53.69 L61.27 53.99 L61.38 46.19 L61.48 65.10 L61.58 63.48 L61.69 59.98 L61.79 60.61 L61.89 60.48 L62.00 60.40 L62.10 62.08 L62.20 46.17 L62.31 67.17 L62.41 59.57 L62.51 59.57 L62.62 65.84 L62.72 64.58 L62.82 59.22 L62.93 60.90 L63.03 59.99 L63.13 52.47 L63.23 59.42 L63.34 57.94 L63.44 56.92 L63.54 61.99 L63.65 40.23 L63.75 65.91 L63.85 55.31 L63.96 64.50 L64.06 62.71 L64.16 58.56 L64.27 64.49 L64.37 65.34 L64.47 59.10 L64.58 58.65 L64.68 59.18 L64.78 63.43 L64.89 65.33 L64.99 62.96 L65.09 57.09 L65.19 77.57 L65.30 55.56 L65.40 52.42 L65.50 54.88 L65.61 64.26 L65.71 56.64 L65.81 50.96 L65.92 59.50 L66.02 58.72 L66.12 79.46 L66.23 58.65 L66.33 64.06 L66.43 62.27 L66.54 43.81 L66.64 59.67 L66.74 58.78 L66.85 58.87 L66.95 64.64 L67.05 58.13 L67.15 66.63 L67.26 56.01 L67.36 58.36 L67.46 64.20 L67.57 61.12 L67.67 64.13 L67.77 62.61 L67.88 56.77 L67.98 65.35 L68.08 56.80 L68.19 61.19 L68.29 56.09 L68.39 59.01 L68.50 66.80 L68.60 60.50 L68.70 65.54 L68.81 68.17 L68.91 58.00 L69.01 62.11 L69.11 56.84 L69.22 41.80 L69.32 58.70 L69.42 63.87 L69.53 61.34 L69.63 59.56 L69.73 58.77 L69.84 59.88 L69.94 60.84 L70.04 42.01 L70.15 65.38 L70.25 64.39 L70.35 55.04 L70.46 54.41 L70.56 63.73 L70.66 58.16 L70.77 60.74 L70.87 56.37 L70.97 68.32 L71.07 58.16 L71.18 60.27 L71.28 61.58 L71.38 63.01 L71.49 59.02 L71.59 48.79 L71.69 60.76 L71.80 60.17 L71.90 64.34 L72.00 63.90 L72.11 53.86 L72.21 57.08 L72.31 62.51 L72.42 61.03 L72.52 47.65 L72.62 63.85 L72.73 60.23 L72.83 57.10 L72.93 55.06 L73.03 62.79 L73.14 69.71 L73.24 58.09 L73.34 53.20 L73.45 43.81 L73.55 55.18 L73.65 56.20 L73.76 54.72 L73.86 44.13 L73.96 55.46 L74.07 57.96 L74.17 56.93 L74.27 54.97 L74.38 56.33 L74.48 57.39 L74.58 59.02 L74.69 65.26 L74.79 77.74 L74.89 58.69 L74.99 68.27 L75.10 59.28 L75.20 62.10 L75.30 67.61 L75.41 57.31 L75.51 64.15 L75.61 61.92 L75.72 70.18 L75.82 76.64 L75.92 65.15 L76.03 61.54 L76.13 58.40 L76.23 56.22 L76.34 55.24 L76.44 51.26 L76.54 59.19 L76.65 57.03 L76.75 66.98 L76.85 62.87 L76.95 53.10 L77.06 59.05 L77.16 64.55 L77.26 58.33 L77.37 56.97 L77.47 66.36 L77.57 61.19 L77.68 53.77 L77.78 61.69 L77.88 58.18 L77.99 56.57 L78.09 49.51 L78.19 64.39 L78.30 61.94 L78.40 60.25 L78.50 56.12 L78.61 56.98 L78.71 54.62 L78.81 65.17 L78.91 59.15 L79.02 58.80 L79.12 59.57 L79.22 58.80 L79.33 60.10 L79.43 59.46 L79.53 63.77 L79.64 57.26 L79.74 55.12 L79.84 58.47 L79.95 41.67 L80.05 60.39 L80.15 63.73 L80.26 61.42 L80.36 46.22 L80.46 60.00 L80.57 49.00 L80.67 59.32 L80.77 62.46 L80.87 58.80 L80.98 62.61 L81.08 58.48 L81.18 61.56 L81.29 58.63 L81.39 61.30 L81.49 57.85 L81.60 59.20 L81.70 52.66 L81.80 68.72 L81.91 73.43 L82.01 64.49 L82.11 56.35 L82.22 60.69 L82.32 58.26 L82.42 61.07 L82.53 56.20 L82.63 56.38 L82.73 55.91 L82.83 43.51 L82.94 50.49 L83.04 65.92 L83.14 67.80 L83.25 54.32 L83.35 56.73 L83.45 60.35 L83.56 65.55 L83.66 58.94 L83.76 49.53 L83.87 55.72 L83.97 63.18 L84.07 55.03 L84.18 65.05 L84.28 62.19 L84.38 67.64 L84.48 54.30 L84.59 67.26 L84.69 68.12 L84.79 62.90 L84.90 57.66 L85.00 67.60 L85.10 56.24 L85.21 63.31 L85.31 61.69 L85.41 59.57 L85.52 58.97 L85.62 61.60 L85.72 62.88 L85.83 59.61 L85.93 64.63 L86.03 49.06 L86.14 49.82 L86.24 59.61 L86.34 52.72 L86.44 59.29 L86.55 55.49 L86.65 61.02 L86.75 60.89 L86.86 57.45 L86.96 63.82 L87.06 57.40 L87.17 60.23 L87.27 64.80 L87.37 61.51 L87.48 57.75 L87.58 62.99 L87.68 54.98 L87.79 60.00 L87.89 64.59 L87.99 58.54 L88.10 55.84 L88.20 56.01 L88.30 61.70 L88.40 77.56 L88.51 61.18 L88.61 51.59 L88.71 66.41 L88.82 57.72 L88.92 53.63 L89.02 59.05 L89.13 63.95 L89.23 59.69 L89.33 58.03 L89.44 61.71 L89.54 64.55 L89.64 60.00 L89.75 59.64 L89.85 61.18 L89.95 54.16 L90.06 55.28 L90.16 60.64 L90.26 58.33 L90.36 58.83 L90.47 58.43 L90.57 60.97 L90.67 59.26 L90.78 58.22 L90.88 57.25 L90.98 61.58 L91.09 54.04 L91.19 58.80 L91.29 71.50 L91.40 63.04 L91.50 53.37 L91.60 65.16 L91.71 65.60 L91.81 43.82 L91.91 56.76 L92.02 61.07 L92.12 67.21 L92.22 59.07 L92.32 63.13 L92.43 65.18 L92.53 56.86 L92.63 56.96 L92.74 56.84 L92.84 59.18 L92.94 60.90 L93.05 57.59 L93.15 54.14 L93.25 58.20 L93.36 63.75 L93.46 48.02 L93.56 64.27 L93.67 49.97 L93.77 57.96 L93.87 51.61 L93.98 49.59 L94.08 49.29 L94.18 64.84 L94.28 64.27 L94.39 57.83 L94.49 57.76 L94.59 58.42 L94.70 53.79 L94.80 79.74 L94.90 57.50 L95.01 58.38 L95.11 57.98 L95.21 58.74 L95.32 60.32 L95.42 60.17 L95.52 58.37 L95.63 60.17 L95.73 57.71 L95.83 65.43 L95.94 54.50 L96.04 57.19 L96.14 61.89 L96.24 61.34 L96.35 69.47 L96.45 60.57 L96.55 58.80 L96.66 56.00 L96.76 58.86 L96.86 55.27 L96.97 64.64 L97.07 58.17 L97.17 62.83 L97.28 59.73 L97.38 56.30 L97.48 63.37 L97.59 57.62 L97.69 58.43 L97.79 51.67 L97.90 64.22 L98.00 59.80 L98.10 64.14 L98.20 64.27 L98.31 59.59 L98.41 59.15 L98.51 57.44 L98.62 60.11 L98.72 64.10 L98.82 56.47 L98.93 59.58 L99.03 47.36 L99.13 63.23 L99.24 59.18 L99.34 68.76 L99.44 61.53 L99.55 70.18 L99.65 54.72 L99.75 61.33 L99.86 53.91 L99.96 66.88 L100.06 63.53 L100.16 60.78 L100.27 59.71 L100.37 59.88 L100.47 66.57 L100.58 58.14 L100.68 67.92 L100.78 60.06 L100.89 65.31 L100.99 58.02 L101.09 57.47 L101.20 55.70 L101.30 46.22 L101.40 59.83 L101.51 49.63 L101.61 71.40 L101.71 60.64 L101.82 48.30 L101.92 58.39 L102.02 58.50 L102.12 65.22 L102.23 55.15 L102.33 56.27 L102.43 62.12 L102.54 52.80 L102.64 63.20 L102.74 61.53 L102.85 65.73 L102.95 60.11 L103.05 64.41 L103.16 65.50 L103.26 57.35 L103.36 57.48 L103.47 71.34 L103.57 75.55 L103.67 79.01 L103.78 57.61 L103.88 57.03 L103.98 56.58 L104.08 58.89 L104.19 53.77 L104.29 53.59 L104.39 54.03 L104.50 57.61 L104.60 62.29 L104.70 58.94 L104.81 55.26 L104.91 60.37 L105.01 61.30 L105.12 59.77 L105.22 58.09 L105.32 62.21 L105.43 61.92 L105.53 66.79 L105.63 52.39 L105.74 54.74 L105.84 53.64 L105.94 62.57 L106.04 70.12 L106.15 41.76 L106.25 59.07 L106.35 55.45 L106.46 58.36 L106.56 60.11 L106.66 57.49 L106.77 50.08 L106.87 58.19 L106.97 55.83 L107.08 60.74 L107.18 52.41 L107.28 55.67 L107.39 60.36 L107.49 48.98 L107.59 62.30 L107.70 56.18 L107.80 52.91 L107.90 61.68 L108.00 59.48 L108.11 54.64 L108.21 61.27 L108.31 62.66 L108.42 57.94 L108.52 63.38 L108.62 67.37 L108.73 64.14 L108.83 56.91 L108.93 57.53 L109.04 65.01 L109.14 48.85 L109.24 57.66 L109.35 57.62 L109.45 54.51 L109.55 54.61 L109.66 65.52 L109.76 59.31 L109.86 62.70 L109.96 70.42 L110.07 49.78 L110.17 66.47 L110.27 54.26 L110.38 57.74 L110.48 60.14 L110.58 61.91 L110.69 61.79 L110.79 69.83 L110.89 54.38 L111.00 60.34 L111.10 56.08 L111.20 57.46 L111.31 53.21 L111.41 58.71 L111.51 62.22 L111.62 63.61 L111.72 60.93 L111.82 61.97 L111.92 76.47 L112.03 55.06 L112.13 62.26 L112.23 52.36 L112.34 65.86 L112.44 62.01 L112.54 58.24 L112.65 59.60 L112.75 60.81 L112.85 63.00 L112.96 61.91 L113.06 51.99 L113.16 57.14 L113.27 68.12 L113.37 63.40 L113.47 66.60 L113.58 66.68 L113.68 59.17 L113.78 53.25 L113.88 55.33 L113.99 56.80 L114.09 59.03 L114.19 57.17 L114.30 61.02 L114.40 57.83 L114.50 61.73 L114.61 56.70 L114.71 55.57 L114.81 59.01 L114.92 62.56 L115.02 65.51 L115.12 63.38 L115.23 61.34 L115.33 42.44 L115.43 59.01 L115.54 56.62 L115.64 60.31 L115.74 61.07 L115.84 68.17 L115.95 62.83 L116.05 60.52 L116.15 56.44 L116.26 64.83 L116.36 61.63 L116.46 52.52 L116.57 63.58 L116.67 48.56 L116.77 54.55 L116.88 56.11 L116.98 67.49 L117.08 68.43 L117.19 61.01 L117.29 55.25 L117.39 59.61 L117.49 59.72 L117.60 58.43 L117.70 64.52 L117.80 60.87 L117.91 54.58 L118.01 62.17 L118.11 61.48 L118.22 47.55 L118.32 58.65 L118.42 46.27 L118.53 62.09 L118.63 60.01 L118.73 60.39 L118.84 77.68 L118.94 55.67 L119.04 62.08 L119.15 64.17 L119.25 62.56 L119.35 62.35 L119.45 54.82 L119.56 51.11 L119.66 56.20 L119.76 60.57 L119.87 66.78 L119.97 59.09 L120.07 57.20 L120.18 59.97 L120.28 61.13 L120.38 79.73 L120.49 55.82 L120.59 57.48 L120.69 70.87 L120.80 54.27 L120.90 54.94 L121.00 59.03 L121.11 66.75 L121.21 54.53 L121.31 59.19 L121.41 61.07 L121.52 64.57 L121.62 59.75 L121.72 59.28 L121.83 62.09 L121.93 57.46 L122.03 57.23 L122.14 54.62 L122.24 64.03 L122.34 79.27 L122.45 54.92 L122.55 70.93 L122.65 61.39 L122.76 59.19 L122.86 55.93 L122.96 63.65 L123.07 51.95 L123.17 65.15 L123.27 68.62 L123.37 59.19 L123.48 59.01 L123.58 59.51 L123.68 54.88 L123.79 62.34 L123.89 61.98 L123.99 58.21 L124.10 61.39 L124.20 61.36 L124.30 63.24 L124.41 65.65 L124.51 59.95 L124.61 52.90 L124.72 62.00 L124.82 59.77 L124.92 58.48 L125.03 58.94 L125.13 59.06 L125.23 54.04 L125.33 60.13 L125.44 57.15 L125.54 66.78 L125.64 43.81 L125.75 52.56 L125.85 58.83 L125.95 45.69 L126.06 71.26 L126.16 52.51 L126.26 68.95 L126.37 59.64 L126.47 59.68 L126.57 67.09 L126.68 56.68 L126.78 58.92 L126.88 59.77 L126.99 59.10 L127.09 62.67 L127.19 58.99 L127.29 61.54 L127.40 52.76 L127.50 60.80 L127.60 61.62 L127.71 68.70 L127.81 62.28 L127.91 46.31 L128.02 67.33 L128.12 47.01 L128.22 54.84 L128.33 65.71 L128.43 56.78 L128.53 63.77 L128.64 48.89 L128.74 64.29 L128.84 60.92 L128.95 61.65 L129.05 53.04 L129.15 67.21 L129.25 62.55 L129.36 59.28 L129.46 54.53 L129.56 61.30 L129.67 59.73 L129.77 64.10 L129.87 55.18 L129.98 60.35 L130.08 51.07 L130.18 64.74 L130.29 70.31 L130.39 56.37 L130.49 63.38 L130.60 44.25 L130.70 57.44 L130.80 62.79 L130.91 60.87 L131.01 59.14 L131.11 40.48 L131.21 56.27 L131.32 79.04 L131.42 67.29 L131.52 55.88 L131.63 58.64 L131.73 65.60 L131.83 57.35 L131.94 59.89 L132.04 62.10 L132.14 68.42 L132.25 62.87 L132.35 57.42 L132.45 62.08 L132.56 66.66 L132.66 61.97 L132.76 61.96 L132.87 62.60 L132.97 51.88 L133.07 58.05 L133.17 63.81 L133.28 45.62 L133.38 56.09 L133.48 69.46 L133.59 62.38 L133.69 54.52 L133.79 61.99 L133.90 63.11 L134.00 66.86" fill="none" stroke="#c41e3a" stroke-width="0.5" opacity="0.9"/><rect x="0" y="54.10000000000002" width="134.0" height="12" fill="#b01e38" opacity="0.5"/><rect x="0.4" y="0.4" width="133.2" height="119.8" fill="none" stroke="#8a8a8a" stroke-width="0.9"/></svg>
<span class="t" style="left:19.25px;top:554.98px;font-size:8.88px;line-height:8.88px;font-weight:400;color:#333;font-family:'Liberation Sans';">200u</span>
<span class="t" style="left:19.25px;top:582.48px;font-size:8.88px;line-height:8.88px;font-weight:400;color:#333;font-family:'Liberation Sans';">100u</span>
<span class="t" style="left:34.06px;top:609.98px;font-size:8.88px;line-height:8.88px;font-weight:400;color:#333;font-family:'Liberation Sans';">0</span>
<span class="t" style="left:16.30px;top:637.48px;font-size:8.88px;line-height:8.88px;font-weight:400;color:#333;font-family:'Liberation Sans';">-100u</span>
<span class="t" style="left:16.30px;top:664.98px;font-size:8.88px;line-height:8.88px;font-weight:400;color:#333;font-family:'Liberation Sans';">-200u</span>
<span class="t" style="left:38.83px;top:677.78px;font-size:8.88px;line-height:8.88px;font-weight:400;color:#333;font-family:'Liberation Sans';">0</span>
<span class="t" style="left:59.27px;top:677.78px;font-size:8.88px;line-height:8.88px;font-weight:400;color:#333;font-family:'Liberation Sans';">40m</span>
<span class="t" style="left:85.97px;top:677.78px;font-size:8.88px;line-height:8.88px;font-weight:400;color:#333;font-family:'Liberation Sans';">80m</span>
<span class="t" style="left:110.90px;top:677.78px;font-size:8.88px;line-height:8.88px;font-weight:400;color:#333;font-family:'Liberation Sans';">120m</span>
<span class="t" style="left:137.30px;top:677.78px;font-size:8.88px;line-height:8.88px;font-weight:400;color:#333;font-family:'Liberation Sans';">160m</span>
<span class="t" style="left:94.00px;top:686.78px;font-size:8.88px;line-height:8.88px;font-weight:400;color:#333;font-family:'Liberation Sans';transform:scaleX(0.8691);transform-origin:0 0;">Time (s)</span>
<div style="left:5px;top:573px;width:12px;height:85px"><span class="t" style="left:-36px;top:37px;width:85px;font-size:8.3px;line-height:10px;color:#333;transform:rotate(-90deg) scaleX(0.93);text-align:center;font-family:'Liberation Sans'">Instantaneous Level (V)</span></div>
<div style="left:207px;top:73.8px;width:97.3px;height:18.9px;background:linear-gradient(#cde7f2,#a8d1e3);border:1.3px solid #2f5c6c;border-radius:3px"></div>
<svg style="left:238px;top:78.5px" width="8" height="10" viewBox="0 0 8 10"><path d="M0.5 0.5 L7.5 5 L0.5 9.5Z" fill="#1d4250"/></svg>
<span class="t" style="left:251.00px;top:78.97px;font-size:9.84px;line-height:9.84px;font-weight:700;color:#2a4d5a;font-family:'Liberation Sans';transform:scaleX(0.9372);transform-origin:0 0;">Start</span>
<div style="left:207px;top:98px;width:8px;height:8.5px;background:#f4f4f4;border:1px solid #8a9498;border-radius:1.5px"></div>
<span class="t" style="left:219.50px;top:97.78px;font-size:8.88px;line-height:8.88px;font-weight:400;color:#2b2b2b;font-family:'Liberation Sans';transform:scaleX(0.9246);transform-origin:0 0;">Append Graph Data</span>
<div style="left:202px;top:113px;width:221.5px;height:1.3px;background:#d3dee1"></div>
<div style="left:208px;top:121px;width:2px;height:2px;background:#111"></div>
<span class="t" style="left:213.00px;top:116.83px;font-size:9.42px;line-height:9.42px;font-weight:700;color:#111;font-family:'Liberation Sans';transform:scaleX(0.9562);transform-origin:0 0;">Generator</span>
<span class="t" style="left:231.50px;top:138.30px;font-size:9.21px;line-height:9.21px;font-weight:400;color:#2b2b2b;font-family:'Liberation Sans';transform:scaleX(0.8746);transform-origin:0 0;">Start Frequency:</span>
<div style="left:298.5px;top:134.6px;width:82.5px;height:16px;background:#fff;border:1px solid #5a9bd0;box-shadow:0 1px 0 rgba(0,0,0,0.08)"></div>
<div style="left:300.3px;top:137.6px;width:40.0px;height:10.5px;background:#1a6fcf"></div>
<span class="t" style="left:300.70px;top:138.38px;font-size:8.88px;line-height:8.88px;font-weight:400;color:#fff;font-family:'Liberation Sans';transform:scaleX(0.8699);transform-origin:0 0;">10.0000 Hz</span>
<svg style="left:371.0px;top:140.6px" width="7" height="4" viewBox="0 0 7 4"><path d="M0.5 0.5 L3.5 3.3 L6.5 0.5" fill="none" stroke="#777" stroke-width="0.8"/></svg>
<svg style="left:382.8px;top:134.6px" width="11.5" height="16" viewBox="0 0 11.5 16"><rect x="0" y="0" width="11.5" height="7.6" rx="1.6" fill="#5f8790"/><path d="M2.5 5.7 L5.75 2 L9 5.7Z" fill="#eef3f4"/><rect x="0" y="8.4" width="11.5" height="7.6" rx="1.6" fill="#5f8790"/><path d="M2.5 10.3 L5.75 14 L9 10.3Z" fill="#eef3f4"/></svg>
<span class="t" style="left:231.50px;top:160.30px;font-size:9.21px;line-height:9.21px;font-weight:400;color:#2b2b2b;font-family:'Liberation Sans';transform:scaleX(0.8811);transform-origin:0 0;">Stop Frequency:</span>
<div style="left:298.5px;top:156.8px;width:82.5px;height:15.8px;background:#fff;border:1px solid #c8cfd2;box-shadow:0 1px 0 rgba(0,0,0,0.08)"></div>
<span class="t" style="left:300.70px;top:160.38px;font-size:8.88px;line-height:8.88px;font-weight:400;color:#2b2b2b;font-family:'Liberation Sans';transform:scaleX(0.8828);transform-origin:0 0;">80.0000 kHz</span>
<svg style="left:371.0px;top:162.70000000000002px" width="7" height="4" viewBox="0 0 7 4"><path d="M0.5 0.5 L3.5 3.3 L6.5 0.5" fill="none" stroke="#777" stroke-width="0.8"/></svg>
<svg style="left:382.8px;top:156.8px" width="11.5" height="15.8" viewBox="0 0 11.5 16"><rect x="0" y="0" width="11.5" height="7.6" rx="1.6" fill="#5f8790"/><path d="M2.5 5.7 L5.75 2 L9 5.7Z" fill="#eef3f4"/><rect x="0" y="8.4" width="11.5" height="7.6" rx="1.6" fill="#5f8790"/><path d="M2.5 10.3 L5.75 14 L9 10.3Z" fill="#eef3f4"/></svg>
<span class="t" style="left:270.00px;top:180.80px;font-size:9.21px;line-height:9.21px;font-weight:400;color:#2b2b2b;font-family:'Liberation Sans';transform:scaleX(0.8550);transform-origin:0 0;">Level:</span>
<div style="left:298.5px;top:177.2px;width:82.5px;height:15.4px;background:#fff;border:1px solid #c8cfd2;box-shadow:0 1px 0 rgba(0,0,0,0.08)"></div>
<span class="t" style="left:300.70px;top:180.38px;font-size:8.88px;line-height:8.88px;font-weight:400;color:#2b2b2b;font-family:'Liberation Sans';transform:scaleX(0.8877);transform-origin:0 0;">0.990 Vrms</span>
<svg style="left:371.0px;top:182.89999999999998px" width="7" height="4" viewBox="0 0 7 4"><path d="M0.5 0.5 L3.5 3.3 L6.5 0.5" fill="none" stroke="#777" stroke-width="0.8"/></svg>
<svg style="left:382.8px;top:177.2px" width="11.5" height="15.4" viewBox="0 0 11.5 16"><rect x="0" y="0" width="11.5" height="7.6" rx="1.6" fill="#5f8790"/><path d="M2.5 5.7 L5.75 2 L9 5.7Z" fill="#eef3f4"/><rect x="0" y="8.4" width="11.5" height="7.6" rx="1.6" fill="#5f8790"/><path d="M2.5 10.3 L5.75 14 L9 10.3Z" fill="#eef3f4"/></svg>
<span class="t" style="left:266.00px;top:201.10px;font-size:9.21px;line-height:9.21px;font-weight:400;color:#2b2b2b;font-family:'Liberation Sans';transform:scaleX(0.9275);transform-origin:0 0;">Offset:</span>
<div style="left:298.5px;top:197px;width:82.5px;height:16px;background:#fff;border:1px solid #5a9bd0;box-shadow:0 1px 0 rgba(0,0,0,0.08)"></div>
<span class="t" style="left:300.70px;top:200.78px;font-size:8.88px;line-height:8.88px;font-weight:400;color:#2b2b2b;font-family:'Liberation Sans';transform:scaleX(0.9148);transform-origin:0 0;">0.000 V</span>
<svg style="left:382.8px;top:197px" width="11.5" height="16" viewBox="0 0 11.5 16"><rect x="0" y="0" width="11.5" height="7.6" rx="1.6" fill="#5f8790"/><path d="M2.5 5.7 L5.75 2 L9 5.7Z" fill="#eef3f4"/><rect x="0" y="8.4" width="11.5" height="7.6" rx="1.6" fill="#5f8790"/><path d="M2.5 10.3 L5.75 14 L9 10.3Z" fill="#eef3f4"/></svg>
<span class="t" style="left:277.50px;top:223.30px;font-size:9.21px;line-height:9.21px;font-weight:400;color:#2b2b2b;font-family:'Liberation Sans';transform:scaleX(0.8512);transform-origin:0 0;">EQ:</span>
<div style="left:299px;top:220.2px;width:97px;height:14.8px;background:#fff;border:1px solid #c8cfd2;box-shadow:0 1px 0 rgba(0,0,0,0.08)"></div>
<span class="t" style="left:301.20px;top:222.78px;font-size:8.88px;line-height:8.88px;font-weight:400;color:#2b2b2b;font-family:'Liberation Sans';transform:scaleX(0.9426);transform-origin:0 0;">None</span>
<svg style="left:386px;top:225.6px" width="7" height="4" viewBox="0 0 7 4"><path d="M0.5 0.5 L3.5 3.3 L6.5 0.5" fill="none" stroke="#777" stroke-width="0.8"/></svg>
<div style="left:299.5px;top:241px;width:46px;height:15.5px;background:#f2f4f5;border:1px solid #e3e7e8;border-radius:2px"></div>
<span class="t" style="left:312.00px;top:244.68px;font-size:8.88px;line-height:8.88px;font-weight:400;color:#444;font-family:'Liberation Sans';transform:scaleX(0.9250);transform-origin:0 0;">Edit...</span>
<span class="t" style="left:249.50px;top:270.10px;font-size:9.21px;line-height:9.21px;font-weight:400;color:#2b2b2b;font-family:'Liberation Sans';transform:scaleX(0.8629);transform-origin:0 0;">Pre-Sweep:</span>
<div style="left:299px;top:266.4px;width:84px;height:15.4px;background:#fff;border:1px solid #c8cfd2;box-shadow:0 1px 0 rgba(0,0,0,0.08)"></div>
<span class="t" style="left:301.20px;top:269.58px;font-size:8.88px;line-height:8.88px;font-weight:400;color:#2b2b2b;font-family:'Liberation Sans';transform:scaleX(0.8584);transform-origin:0 0;">0.000 s</span>
<svg style="left:373px;top:272.09999999999997px" width="7" height="4" viewBox="0 0 7 4"><path d="M0.5 0.5 L3.5 3.3 L6.5 0.5" fill="none" stroke="#777" stroke-width="0.8"/></svg>
<span class="t" style="left:244.00px;top:290.40px;font-size:9.21px;line-height:9.21px;font-weight:400;color:#2b2b2b;font-family:'Liberation Sans';transform:scaleX(0.8834);transform-origin:0 0;">Sweep Time:</span>
<div style="left:299px;top:286.7px;width:84px;height:15.5px;background:#fff;border:1px solid #c8cfd2;box-shadow:0 1px 0 rgba(0,0,0,0.08)"></div>
<span class="t" style="left:301.20px;top:289.98px;font-size:8.88px;line-height:8.88px;font-weight:400;color:#2b2b2b;font-family:'Liberation Sans';transform:scaleX(0.9174);transform-origin:0 0;">350.0 ms</span>
<svg style="left:373px;top:292.45px" width="7" height="4" viewBox="0 0 7 4"><path d="M0.5 0.5 L3.5 3.3 L6.5 0.5" fill="none" stroke="#777" stroke-width="0.8"/></svg>
<span class="t" style="left:207.00px;top:312.78px;font-size:8.88px;line-height:8.88px;font-weight:400;color:#2b2b2b;font-family:'Liberation Sans';transform:scaleX(0.9633);transform-origin:0 0;">Channels:</span>
<svg style="left:204.5px;top:328.5px" width="22" height="11" viewBox="0 0 22 11"><rect x="0" y="0" width="10.6" height="11" rx="1.5" fill="#3f7580"/><rect x="11" y="0" width="10.6" height="11" rx="1.5" fill="#3f7580"/><text x="5.3" y="8.8" text-anchor="middle" font-family="Liberation Sans" font-weight="700" font-size="8" fill="#f2f7f8">1</text><text x="16.3" y="8.8" text-anchor="middle" font-family="Liberation Sans" font-weight="700" font-size="8" fill="#f2f7f8">2</text></svg>
<div style="left:202px;top:345px;width:221.5px;height:1.2px;background:#d3dee1"></div>
<div style="left:208px;top:353px;width:2px;height:2px;background:#111"></div>
<span class="t" style="left:213.00px;top:348.63px;font-size:9.42px;line-height:9.42px;font-weight:700;color:#111;font-family:'Liberation Sans';transform:scaleX(0.9562);transform-origin:0 0;">Analyzer</span>
<span class="t" style="left:209.50px;top:366.40px;font-size:9.21px;line-height:9.21px;font-weight:400;color:#2b2b2b;font-family:'Liberation Sans';transform:scaleX(0.8950);transform-origin:0 0;">Extend Acquisition By:</span>
<div style="left:299px;top:362.4px;width:55.2px;height:15.8px;background:#fff;border:1px solid #c8cfd2;box-shadow:0 1px 0 rgba(0,0,0,0.08)"></div>
<span class="t" style="left:301.20px;top:365.98px;font-size:8.88px;line-height:8.88px;font-weight:400;color:#2b2b2b;font-family:'Liberation Sans';transform:scaleX(0.8900);transform-origin:0 0;">50.00 ms</span>
<div style="left:205px;top:388px;width:193px;height:1.2px;background:#d3dee1"></div>
<div style="left:210px;top:395.2px;width:2px;height:2px;background:#111"></div>
<span class="t" style="left:215.50px;top:390.83px;font-size:9.42px;line-height:9.42px;font-weight:700;color:#111;font-family:'Liberation Sans';transform:scaleX(0.9565);transform-origin:0 0;">Nesting</span>
<span class="t" style="left:222.50px;top:407.10px;font-size:9.21px;line-height:9.21px;font-weight:400;color:#2b2b2b;font-family:'Liberation Sans';transform:scaleX(0.8750);transform-origin:0 0;">Secondary Source:</span>
<div style="left:299px;top:403.4px;width:97.2px;height:15.3px;background:#fff;border:1px solid #c8cfd2;box-shadow:0 1px 0 rgba(0,0,0,0.08)"></div>
<span class="t" style="left:301.20px;top:406.48px;font-size:8.88px;line-height:8.88px;font-weight:400;color:#2b2b2b;font-family:'Liberation Sans';transform:scaleX(0.9426);transform-origin:0 0;">None</span>
<svg style="left:386.2px;top:409.04999999999995px" width="7" height="4" viewBox="0 0 7 4"><path d="M0.5 0.5 L3.5 3.3 L6.5 0.5" fill="none" stroke="#777" stroke-width="0.8"/></svg>
<div style="left:202px;top:441.5px;width:221.5px;height:1.2px;background:#d3dee1"></div>
<div style="left:206px;top:446.6px;width:86.7px;height:14.7px;background:#fbfcfc;border:1px solid #e6ebec;border-radius:2px"></div>
<span class="t" style="left:211.50px;top:449.78px;font-size:8.88px;line-height:8.88px;font-weight:400;color:#333;font-family:'Liberation Sans';transform:scaleX(0.9274);transform-origin:0 0;">Advanced Settings...</span>
<div style="left:198.8px;top:371.0px;width:1.5px;height:1.5px;background:#b9cdd5"></div>
<div style="left:198.8px;top:374.5px;width:1.5px;height:1.5px;background:#b9cdd5"></div>
<div style="left:198.8px;top:378.0px;width:1.5px;height:1.5px;background:#b9cdd5"></div>
<svg style="left:425.5px;top:72px" width="11" height="11" viewBox="0 0 11 11"><rect width="11" height="11" fill="#1f4756"/><rect x="1.5" y="1" width="8.5" height="9" fill="#eef2f3"/><rect x="3.2" y="1" width="5" height="3" fill="#1f4756"/><rect x="3.2" y="6" width="5" height="4" fill="#1f4756"/><path d="M5.7 6.4 V9.6 M4.1 8 H7.3" stroke="#fff" stroke-width="0.9"/></svg>
<svg style="left:438.5px;top:77px" width="4" height="3" viewBox="0 0 4 3"><path d="M0 0.3 H4 L2 2.8Z" fill="#1a1a1a"/></svg>
<svg style="left:446.5px;top:72px" width="11.5" height="11" viewBox="0 0 11.5 11"><rect width="11.5" height="11" fill="#1f4756"/><path d="M2 2 H6 V5 H9.5 V9.5 H5.5 V6 H2Z" fill="#eef2f3"/><path d="M6 2 L9.5 5" stroke="#eef2f3" stroke-width="0.8"/></svg>
<svg style="left:462.5px;top:72px" width="11.5" height="11" viewBox="0 0 11.5 11"><rect width="11.5" height="11" fill="#1f4756"/><rect x="1.5" y="4" width="8.5" height="4.5" rx="0.8" fill="#eef2f3"/><rect x="3" y="1.5" width="5.5" height="2.5" fill="#eef2f3"/><rect x="3" y="7" width="5.5" height="2.8" fill="#fff" stroke="#1f4756" stroke-width="0.5"/></svg>
<div style="left:479px;top:71px;width:0.8px;height:12px;background:#bfcbcf"></div>
<svg style="left:483px;top:72px" width="11.5" height="11" viewBox="0 0 11.5 11"><rect width="11.5" height="11" fill="#1f4756"/><circle cx="4.8" cy="4.6" r="3" fill="none" stroke="#eef2f3" stroke-width="1"/><path d="M3.3 4.6 H6.3 M4.8 3.1 V6.1" stroke="#eef2f3" stroke-width="0.8"/><path d="M7 7 L10 10" stroke="#eef2f3" stroke-width="1.3"/></svg>
<svg style="left:499px;top:72px" width="11.5" height="11" viewBox="0 0 11.5 11"><rect width="11.5" height="11" fill="#1f4756"/><path d="M5.75 1 V10 M1 5.5 H10.5" stroke="#eef2f3" stroke-width="1"/><path d="M5.75 0.6 L4 2.6 H7.5Z M5.75 10.4 L4 8.4 H7.5Z M0.6 5.5 L2.6 3.8 V7.2Z M10.9 5.5 L8.9 3.8 V7.2Z" fill="#eef2f3"/></svg>
<svg style="left:515px;top:72px" width="11.5" height="11" viewBox="0 0 11.5 11"><rect width="11.5" height="11" fill="#1f4756"/><path d="M1.5 1.5 L4.3 4.3 M10 1.5 L7.2 4.3 M1.5 9.5 L4.3 6.7 M10 9.5 L7.2 6.7" stroke="#eef2f3" stroke-width="1"/><path d="M1 1 H4 L1 4Z M10.5 1 H7.5 L10.5 4Z M1 10 H4 L1 7Z M10.5 10 H7.5 L10.5 7Z" fill="#eef2f3"/></svg>
<div style="left:531px;top:71px;width:0.8px;height:12px;background:#bfcbcf"></div>
<svg style="left:536px;top:72px" width="11.5" height="11" viewBox="0 0 11.5 11"><rect width="11.5" height="11" fill="#1f4756"/><path d="M5.75 0.5 V4 M5.75 7 V10.5 M0.5 5.5 H4 M7.5 5.5 H11" stroke="#eef2f3" stroke-width="1"/><circle cx="5.75" cy="5.5" r="1" fill="none" stroke="#eef2f3" stroke-width="0.6"/></svg>
<div style="left:552px;top:71px;width:0.8px;height:12px;background:#bfcbcf"></div>
<svg style="left:556px;top:72px" width="11.5" height="11" viewBox="0 0 11.5 11"><rect width="11.5" height="11" fill="#3f5b66"/><rect x="1" y="1" width="9.5" height="9" fill="none" stroke="#e4eaec" stroke-width="0.8"/><path d="M1 3.3 H10.5 M1 5.5 H10.5 M1 7.7 H10.5 M3.4 1 V10 M5.75 1 V10 M8.1 1 V10" stroke="#e4eaec" stroke-width="0.6"/></svg>
<svg style="left:571.5px;top:72px" width="11.5" height="11" viewBox="0 0 11.5 11"><rect width="11.5" height="11" fill="#3f5b66"/><rect x="1" y="1.5" width="9.5" height="8" fill="none" stroke="#e4eaec" stroke-width="0.8"/><path d="M2 7 L4.5 4.5 L7 6.5 L9.5 3.5" fill="none" stroke="#e4eaec" stroke-width="0.8"/></svg>
<svg style="left:585px;top:77px" width="4" height="3" viewBox="0 0 4 3"><path d="M0 0.3 H4 L2 2.8Z" fill="#1a1a1a"/></svg>
<svg style="left:593px;top:72px" width="11" height="11" viewBox="0 0 11 11"><rect width="11" height="11" fill="#1f4756"/><text x="1.2" y="8.8" font-family="Liberation Serif" font-style="italic" font-size="9" fill="#eef2f3">f</text><text x="5.2" y="9.5" font-family="Liberation Serif" font-style="italic" font-size="6" fill="#eef2f3">x</text></svg>
<svg style="left:609.2px;top:72px" width="11" height="11" viewBox="0 0 11 11"><rect width="11" height="11" fill="#1f4756"/><path d="M5.71 1.21 L6.54 1.33 L6.83 2.70 L7.35 3.01 L8.69 2.61 L9.19 3.29 L8.42 4.46 L8.57 5.05 L9.79 5.71 L9.67 6.54 L8.30 6.83 L7.99 7.35 L8.39 8.69 L7.71 9.19 L6.54 8.42 L5.95 8.57 L5.29 9.79 L4.46 9.67 L4.17 8.30 L3.65 7.99 L2.31 8.39 L1.81 7.71 L2.58 6.54 L2.43 5.95 L1.21 5.29 L1.33 4.46 L2.70 4.17 L3.01 3.65 L2.61 2.31 L3.29 1.81 L4.46 2.58 L5.05 2.43Z" fill="#f4f7f8"/><circle cx="5.5" cy="5.5" r="1.25" fill="#1f4756"/></svg>
<div style="left:625.5px;top:71px;width:0.8px;height:12px;background:#bfcbcf"></div>
<div style="left:676px;top:69px;width:11.7px;height:17px;background:#cbd6d9"></div>
<div style="left:639px;top:69px;width:37px;height:17px;background:#fff"></div>
<div style="left:687.7px;top:69px;width:48.6px;height:17px;background:#fff"></div>
<span class="t" style="left:630.00px;top:73.78px;font-size:8.88px;line-height:8.88px;font-weight:400;color:#333;font-family:'Liberation Sans';transform:scaleX(0.9288);transform-origin:0 0;">X</span>
<span class="t" style="left:642.50px;top:73.51px;font-size:9.2px;line-height:9.2px;font-weight:400;color:#333;font-family:'Liberation Sans';transform:scaleX(0.9346);transform-origin:0 0;">Hz</span>
<svg style="left:669.5px;top:76.5px" width="4" height="3" viewBox="0 0 4 3"><path d="M0 0.3 H4 L2 2.8Z" fill="#1a1a1a"/></svg>
<span class="t" style="left:679.50px;top:73.78px;font-size:8.88px;line-height:8.88px;font-weight:400;color:#333;font-family:'Liberation Sans';transform:scaleX(0.9288);transform-origin:0 0;">Y</span>
<span class="t" style="left:691.00px;top:73.51px;font-size:9.2px;line-height:9.2px;font-weight:400;color:#333;font-family:'Liberation Sans';transform:scaleX(0.9209);transform-origin:0 0;">dBV</span>
<svg style="left:730px;top:76.5px" width="4" height="3" viewBox="0 0 4 3"><path d="M0 0.3 H4 L2 2.8Z" fill="#1a1a1a"/></svg>
<svg style="left:1186.5px;top:72px" width="10" height="10" viewBox="0 0 10 10"><path d="M4 1 H1 V9 H9 V6" fill="none" stroke="#1f4756" stroke-width="1.4"/><path d="M4.3 5.7 L8.6 1.4 M5.5 1 H9 V4.5" fill="none" stroke="#1f4756" stroke-width="1.4"/></svg>
<svg style="left:455.4px;top:109.4px" width="638.40" height="408.90" viewBox="0 0 638.40 408.90"><path d="M30.39 0 V408.90" stroke="#d2d2d2" stroke-width="0.9"/><path d="M51.95 0 V408.90" stroke="#ececec" stroke-width="0.9"/><path d="M68.68 0 V408.90" stroke="#d2d2d2" stroke-width="0.9"/><path d="M82.35 0 V408.90" stroke="#ececec" stroke-width="0.9"/><path d="M93.90 0 V408.90" stroke="#ececec" stroke-width="0.9"/><path d="M103.91 0 V408.90" stroke="#ececec" stroke-width="0.9"/><path d="M112.74 0 V408.90" stroke="#ececec" stroke-width="0.9"/><path d="M120.63 0 V408.90" stroke="#d2d2d2" stroke-width="0.9"/><path d="M172.59 0 V408.90" stroke="#d2d2d2" stroke-width="0.9"/><path d="M202.98 0 V408.90" stroke="#d2d2d2" stroke-width="0.9"/><path d="M224.54 0 V408.90" stroke="#ececec" stroke-width="0.9"/><path d="M241.27 0 V408.90" stroke="#d2d2d2" stroke-width="0.9"/><path d="M254.93 0 V408.90" stroke="#ececec" stroke-width="0.9"/><path d="M266.49 0 V408.90" stroke="#ececec" stroke-width="0.9"/><path d="M276.50 0 V408.90" stroke="#ececec" stroke-width="0.9"/><path d="M285.33 0 V408.90" stroke="#ececec" stroke-width="0.9"/><path d="M293.22 0 V408.90" stroke="#d2d2d2" stroke-width="0.9"/><path d="M345.18 0 V408.90" stroke="#d2d2d2" stroke-width="0.9"/><path d="M375.57 0 V408.90" stroke="#d2d2d2" stroke-width="0.9"/><path d="M397.13 0 V408.90" stroke="#ececec" stroke-width="0.9"/><path d="M413.86 0 V408.90" stroke="#d2d2d2" stroke-width="0.9"/><path d="M427.52 0 V408.90" stroke="#ececec" stroke-width="0.9"/><path d="M439.08 0 V408.90" stroke="#ececec" stroke-width="0.9"/><path d="M449.09 0 V408.90" stroke="#ececec" stroke-width="0.9"/><path d="M457.91 0 V408.90" stroke="#ececec" stroke-width="0.9"/><path d="M465.81 0 V408.90" stroke="#d2d2d2" stroke-width="0.9"/><path d="M517.77 0 V408.90" stroke="#d2d2d2" stroke-width="0.9"/><path d="M548.16 0 V408.90" stroke="#d2d2d2" stroke-width="0.9"/><path d="M569.72 0 V408.90" stroke="#ececec" stroke-width="0.9"/><path d="M586.45 0 V408.90" stroke="#d2d2d2" stroke-width="0.9"/><path d="M600.11 0 V408.90" stroke="#ececec" stroke-width="0.9"/><path d="M611.67 0 V408.90" stroke="#ececec" stroke-width="0.9"/><path d="M621.67 0 V408.90" stroke="#ececec" stroke-width="0.9"/><path d="M630.50 0 V408.90" stroke="#ececec" stroke-width="0.9"/><path d="M0 34.07 H638.40" stroke="#d6d6d6" stroke-width="0.9"/><path d="M0 68.15 H638.40" stroke="#d6d6d6" stroke-width="0.9"/><path d="M0 102.22 H638.40" stroke="#d6d6d6" stroke-width="0.9"/><path d="M0 136.30 H638.40" stroke="#d6d6d6" stroke-width="0.9"/><path d="M0 170.38 H638.40" stroke="#d6d6d6" stroke-width="0.9"/><path d="M0 204.45 H638.40" stroke="#d6d6d6" stroke-width="0.9"/><path d="M0 238.52 H638.40" stroke="#d6d6d6" stroke-width="0.9"/><path d="M0 272.60 H638.40" stroke="#d6d6d6" stroke-width="0.9"/><path d="M0 306.68 H638.40" stroke="#d6d6d6" stroke-width="0.9"/><path d="M0 340.75 H638.40" stroke="#d6d6d6" stroke-width="0.9"/><path d="M0 374.82 H638.40" stroke="#d6d6d6" stroke-width="0.9"/><path d="M0.6 0 V408.30 H637.80 V0 H0.6" fill="none" stroke="#9a9a9a" stroke-width="1.2"/><path d="M0.20 200.50 L25.60 201.80 L50.60 201.80 L56.60 202.50 L608.60 202.60 L610.60 202.20 L618.60 202.20 L622.10 203.30" fill="none" stroke="#3c4f8a" stroke-width="1" opacity="0.6"/><path d="M0.20 200.50 L25.60 201.80 L50.60 201.80 L56.60 202.50 L608.60 202.60 L610.60 202.20 L618.60 202.20 L622.10 203.30" fill="none" stroke="#c8717d" stroke-width="1.25"/></svg>
<svg style="left:1067px;top:114px" width="23" height="19" viewBox="0 0 23 19"><path d="M10.5 1.6 Q21.5 2.2 21.2 9.3 Q20.8 16.6 10 17.4 Q19 15.4 19.2 9.3 Q19.3 3.6 10.5 1.6Z" fill="#2f86b8"/><text x="1.6" y="13" font-family="Liberation Sans" font-weight="700" font-style="italic" font-size="10.5" fill="#173f5f" transform="scale(0.92 1)">AP</text></svg>
<span class="t" style="left:437.80px;top:105.05px;font-size:8.56px;line-height:8.56px;font-weight:400;color:#333;font-family:'Liberation Sans';">+12</span>
<span class="t" style="left:437.80px;top:139.13px;font-size:8.56px;line-height:8.56px;font-weight:400;color:#333;font-family:'Liberation Sans';">+10</span>
<span class="t" style="left:442.55px;top:173.20px;font-size:8.56px;line-height:8.56px;font-weight:400;color:#333;font-family:'Liberation Sans';">+8</span>
<span class="t" style="left:442.55px;top:207.28px;font-size:8.56px;line-height:8.56px;font-weight:400;color:#333;font-family:'Liberation Sans';">+6</span>
<span class="t" style="left:442.55px;top:241.35px;font-size:8.56px;line-height:8.56px;font-weight:400;color:#333;font-family:'Liberation Sans';">+4</span>
<span class="t" style="left:442.55px;top:275.43px;font-size:8.56px;line-height:8.56px;font-weight:400;color:#333;font-family:'Liberation Sans';">+2</span>
<span class="t" style="left:447.53px;top:309.50px;font-size:8.56px;line-height:8.56px;font-weight:400;color:#333;font-family:'Liberation Sans';">0</span>
<span class="t" style="left:444.69px;top:343.58px;font-size:8.56px;line-height:8.56px;font-weight:400;color:#333;font-family:'Liberation Sans';">-2</span>
<span class="t" style="left:444.69px;top:377.65px;font-size:8.56px;line-height:8.56px;font-weight:400;color:#333;font-family:'Liberation Sans';">-4</span>
<span class="t" style="left:444.69px;top:411.73px;font-size:8.56px;line-height:8.56px;font-weight:400;color:#333;font-family:'Liberation Sans';">-6</span>
<span class="t" style="left:444.69px;top:445.80px;font-size:8.56px;line-height:8.56px;font-weight:400;color:#333;font-family:'Liberation Sans';">-8</span>
<span class="t" style="left:439.94px;top:479.88px;font-size:8.56px;line-height:8.56px;font-weight:400;color:#333;font-family:'Liberation Sans';">-10</span>
<span class="t" style="left:439.94px;top:513.95px;font-size:8.56px;line-height:8.56px;font-weight:400;color:#333;font-family:'Liberation Sans';">-12</span>
<span class="t" style="left:450.04px;top:521.35px;font-size:8.56px;line-height:8.56px;font-weight:400;color:#333;font-family:'Liberation Sans';">20</span>
<span class="t" style="left:480.43px;top:521.35px;font-size:8.56px;line-height:8.56px;font-weight:400;color:#333;font-family:'Liberation Sans';">30</span>
<span class="t" style="left:518.72px;top:521.35px;font-size:8.56px;line-height:8.56px;font-weight:400;color:#333;font-family:'Liberation Sans';">50</span>
<span class="t" style="left:568.30px;top:521.35px;font-size:8.56px;line-height:8.56px;font-weight:400;color:#333;font-family:'Liberation Sans';">100</span>
<span class="t" style="left:620.26px;top:521.35px;font-size:8.56px;line-height:8.56px;font-weight:400;color:#333;font-family:'Liberation Sans';">200</span>
<span class="t" style="left:650.65px;top:521.35px;font-size:8.56px;line-height:8.56px;font-weight:400;color:#333;font-family:'Liberation Sans';">300</span>
<span class="t" style="left:688.94px;top:521.35px;font-size:8.56px;line-height:8.56px;font-weight:400;color:#333;font-family:'Liberation Sans';">500</span>
<span class="t" style="left:743.51px;top:521.35px;font-size:8.56px;line-height:8.56px;font-weight:400;color:#333;font-family:'Liberation Sans';">1k</span>
<span class="t" style="left:795.46px;top:521.35px;font-size:8.56px;line-height:8.56px;font-weight:400;color:#333;font-family:'Liberation Sans';">2k</span>
<span class="t" style="left:825.85px;top:521.35px;font-size:8.56px;line-height:8.56px;font-weight:400;color:#333;font-family:'Liberation Sans';">3k</span>
<span class="t" style="left:864.14px;top:521.35px;font-size:8.56px;line-height:8.56px;font-weight:400;color:#333;font-family:'Liberation Sans';">5k</span>
<span class="t" style="left:913.72px;top:521.35px;font-size:8.56px;line-height:8.56px;font-weight:400;color:#333;font-family:'Liberation Sans';">10k</span>
<span class="t" style="left:965.68px;top:521.35px;font-size:8.56px;line-height:8.56px;font-weight:400;color:#333;font-family:'Liberation Sans';">20k</span>
<span class="t" style="left:996.07px;top:521.35px;font-size:8.56px;line-height:8.56px;font-weight:400;color:#333;font-family:'Liberation Sans';">30k</span>
<span class="t" style="left:1034.36px;top:521.35px;font-size:8.56px;line-height:8.56px;font-weight:400;color:#333;font-family:'Liberation Sans';">50k</span>
<span class="t" style="left:1083.93px;top:521.35px;font-size:8.56px;line-height:8.56px;font-weight:400;color:#333;font-family:'Liberation Sans';">100k</span>
<span class="t" style="left:746.25px;top:529.55px;font-size:8.56px;line-height:8.56px;font-weight:400;color:#333;font-family:'Liberation Sans';transform:scaleX(0.9422);transform-origin:0 0;">Frequency (Hz)</span>
<div style="left:424px;top:281px;width:12px;height:64px"><span class="t" style="left:-26px;top:27px;width:64px;font-size:8px;line-height:10px;color:#333;transform:rotate(-90deg) scaleX(0.95);text-align:center;font-family:'Liberation Sans'">RMS Level (dBV)</span></div>
<span class="t" style="left:755.30px;top:87.52px;font-size:8.13px;line-height:8.13px;font-weight:400;color:#222;font-family:'Liberation Mono';transform:scaleX(0.8430);transform-origin:0 0;">RMS Level</span>
<span class="t" style="left:1002.30px;top:98.55px;font-size:8.56px;line-height:8.56px;font-weight:400;color:#333;font-family:'Liberation Sans';transform:scaleX(0.9965);transform-origin:0 0;">2025/10/9 17:52:47.255</span>
<div style="left:1115.3px;top:109.3px;width:82px;height:44.8px;background:#fff;border:1px solid #555"></div>
<div style="left:1116.3px;top:110.3px;width:80px;height:13.7px;background:#1583b7"></div>
<span class="t" style="left:1141.50px;top:112.60px;font-size:9.1px;line-height:9.1px;font-weight:700;color:#f4f8fb;font-family:'Liberation Sans';transform:scaleX(0.9128);transform-origin:0 0;">Data</span>
<svg style="left:1185px;top:113px" width="9" height="6" viewBox="0 0 9 6"><path d="M0.5 3 H3 M3 1 V5 M3 1.2 H8.5 V4.8 H3" fill="none" stroke="#e8f1f6" stroke-width="0.9"/></svg>
<svg style="left:1118px;top:126.8px" width="9" height="9" viewBox="0 0 9 9"><rect x="0" y="0" width="9" height="9" rx="1.8" fill="#1565b8"/><path d="M2.2 4.6 L3.8 6.2 L6.9 2.8" fill="none" stroke="#fff" stroke-width="0.9"/></svg>
<div style="left:1130px;top:127.30000000000001px;width:8px;height:8px;background:#1a2f7a"></div>
<span class="t" style="left:1140.50px;top:127.08px;font-size:8.88px;line-height:8.88px;font-weight:400;color:#333;font-family:'Liberation Sans';transform:scaleX(0.8906);transform-origin:0 0;">Ch1</span>
<svg style="left:1118px;top:141.5px" width="9" height="9" viewBox="0 0 9 9"><rect x="0" y="0" width="9" height="9" rx="1.8" fill="#1565b8"/><path d="M2.2 4.6 L3.8 6.2 L6.9 2.8" fill="none" stroke="#fff" stroke-width="0.9"/></svg>
<div style="left:1130px;top:142.0px;width:8px;height:8px;background:#d0141e"></div>
<span class="t" style="left:1140.50px;top:141.78px;font-size:8.88px;line-height:8.88px;font-weight:400;color:#333;font-family:'Liberation Sans';transform:scaleX(0.8906);transform-origin:0 0;">Ch2</span>
<svg style="left:426px;top:543.5px" width="11" height="11" viewBox="0 0 11 11"><rect width="11" height="11" fill="#1f4756"/><path d="M2.5 2 V9" stroke="#eef2f3" stroke-width="1.3"/><path d="M8.5 2 L4 5.5 L8.5 9Z" fill="#eef2f3"/></svg>
<svg style="left:442px;top:543.5px" width="11" height="11" viewBox="0 0 11 11"><rect width="11" height="11" fill="#1f4756"/><path d="M8.5 2 V9" stroke="#eef2f3" stroke-width="1.3"/><path d="M2.5 2 L7 5.5 L2.5 9Z" fill="#eef2f3"/></svg>
<div style="left:457.5px;top:542.5px;width:0.8px;height:13px;background:#bfcbcf"></div>
<svg style="left:462px;top:543.5px" width="11" height="11" viewBox="0 0 11 11"><rect width="11" height="11" fill="#1f4756"/><path d="M5.5 1.5 V9.5 M1.5 5.5 H9.5" stroke="#eef2f3" stroke-width="1.6"/></svg>
<span class="t" style="left:475.00px;top:545.01px;font-size:9.2px;line-height:9.2px;font-weight:400;color:#2b2b2b;font-family:'Liberation Sans';transform:scaleX(1.0392);transform-origin:0 0;">Add</span>
<svg style="left:496.5px;top:548px" width="4" height="3" viewBox="0 0 4 3"><path d="M0 0.3 H4 L2 2.8Z" fill="#1a1a1a"/></svg>
<svg style="left:505px;top:543.5px" width="11" height="11" viewBox="0 0 11 11"><rect width="11" height="11" fill="#2d4a78"/><path d="M2.3 2.3 L8.7 8.7 M8.7 2.3 L2.3 8.7" stroke="#eef2f3" stroke-width="1.7"/></svg>
<span class="t" style="left:518.50px;top:545.01px;font-size:9.2px;line-height:9.2px;font-weight:400;color:#2b2b2b;font-family:'Liberation Sans';transform:scaleX(0.9788);transform-origin:0 0;">Delete</span>
<svg style="left:549px;top:548px" width="4" height="3" viewBox="0 0 4 3"><path d="M0 0.3 H4 L2 2.8Z" fill="#1a1a1a"/></svg>
<svg style="left:557px;top:543.5px" width="11" height="11" viewBox="0 0 11 11"><rect width="11" height="11" fill="#1f4756"/><text x="0.6" y="8.2" font-family="Liberation Sans" font-weight="700" font-size="6" fill="#eef2f3">1</text><path d="M5.5 2 H9.5 M9.5 2 V7 L8 5.6 M9.5 7 L11 5.6" fill="none" stroke="#eef2f3" stroke-width="0.8"/><text x="3" y="10.5" font-family="Liberation Sans" font-weight="700" font-size="4.5" fill="#eef2f3">2</text></svg>
<span class="t" style="left:570.50px;top:545.01px;font-size:9.2px;line-height:9.2px;font-weight:400;color:#2b2b2b;font-family:'Liberation Sans';transform:scaleX(0.9627);transform-origin:0 0;">Sort By</span>
<svg style="left:603.5px;top:548px" width="4" height="3" viewBox="0 0 4 3"><path d="M0 0.3 H4 L2 2.8Z" fill="#1a1a1a"/></svg>
<svg style="left:612px;top:543.5px" width="11" height="11" viewBox="0 0 11 11"><rect width="11" height="11" fill="#1f4756"/><path d="M5.71 1.21 L6.54 1.33 L6.83 2.70 L7.35 3.01 L8.69 2.61 L9.19 3.29 L8.42 4.46 L8.57 5.05 L9.79 5.71 L9.67 6.54 L8.30 6.83 L7.99 7.35 L8.39 8.69 L7.71 9.19 L6.54 8.42 L5.95 8.57 L5.29 9.79 L4.46 9.67 L4.17 8.30 L3.65 7.99 L2.31 8.39 L1.81 7.71 L2.58 6.54 L2.43 5.95 L1.21 5.29 L1.33 4.46 L2.70 4.17 L3.01 3.65 L2.61 2.31 L3.29 1.81 L4.46 2.58 L5.05 2.43Z" fill="#f4f7f8"/><circle cx="5.5" cy="5.5" r="1.25" fill="#1f4756"/></svg>
<span class="t" style="left:626.00px;top:545.01px;font-size:9.2px;line-height:9.2px;font-weight:400;color:#2b2b2b;font-family:'Liberation Sans';transform:scaleX(0.9789);transform-origin:0 0;">Details</span>
<svg style="left:1186px;top:544px" width="10" height="10" viewBox="0 0 10 10"><path d="M5 1 V6 M2.8 3.8 L5 6 L7.2 3.8" fill="none" stroke="#1f4756" stroke-width="1.2"/><path d="M1 8.5 H9" stroke="#1f4756" stroke-width="1.4"/></svg>
<svg style="left:439.3px;top:562px" width="61" height="37.5" viewBox="0 0 61 37.5"><rect x="1" y="1" width="59" height="35.5" fill="#fff" stroke="#c3d1d6" stroke-width="2"/><rect x="2.6" y="2.6" width="55.8" height="32.3" fill="#fff" stroke="#7d939b" stroke-width="0.8"/><rect x="0.5" y="0.5" width="60" height="36.5" fill="none" stroke="#4c7282" stroke-width="1.1"/><path d="M10.1 6 V31" stroke="#f2f2f2" stroke-width="0.5"/><path d="M15.2 6 V31" stroke="#f2f2f2" stroke-width="0.5"/><path d="M20.3 6 V31" stroke="#f2f2f2" stroke-width="0.5"/><path d="M25.4 6 V31" stroke="#f2f2f2" stroke-width="0.5"/><path d="M30.5 6 V31" stroke="#f2f2f2" stroke-width="0.5"/><path d="M35.6 6 V31" stroke="#f2f2f2" stroke-width="0.5"/><path d="M40.7 6 V31" stroke="#f2f2f2" stroke-width="0.5"/><path d="M45.8 6 V31" stroke="#f2f2f2" stroke-width="0.5"/><path d="M50.9 6 V31" stroke="#f2f2f2" stroke-width="0.5"/><path d="M5 9.1 H55" stroke="#f2f2f2" stroke-width="0.5"/><path d="M5 12.2 H55" stroke="#f2f2f2" stroke-width="0.5"/><path d="M5 15.3 H55" stroke="#f2f2f2" stroke-width="0.5"/><path d="M5 18.4 H55" stroke="#f2f2f2" stroke-width="0.5"/><path d="M5 21.5 H55" stroke="#f2f2f2" stroke-width="0.5"/><path d="M5 24.6 H55" stroke="#f2f2f2" stroke-width="0.5"/><path d="M5 27.7 H55" stroke="#f2f2f2" stroke-width="0.5"/><rect x="5" y="6" width="50" height="25" fill="none" stroke="#d6d6d6" stroke-width="0.5"/><path d="M5 18.3 H55" stroke="#eab0b6" stroke-width="0.6"/><path d="M40 4.5 H48" stroke="#ccc" stroke-width="0.7"/><path d="M6 32.5 H54" stroke="#d4d4d4" stroke-width="0.6" stroke-dasharray="0.8 4"/><path d="M4 8 V30" stroke="#e0e0e0" stroke-width="0.5" stroke-dasharray="0.8 3"/></svg>
<svg style="left:526px;top:562px" width="61" height="37.5" viewBox="0 0 61 37.5"><rect x="1" y="1" width="59" height="35.5" fill="#fff" stroke="#c3d1d6" stroke-width="2"/><rect x="2.6" y="2.6" width="55.8" height="32.3" fill="#fff" stroke="#7d939b" stroke-width="0.8"/><path d="M10.1 6 V31" stroke="#f2f2f2" stroke-width="0.5"/><path d="M15.2 6 V31" stroke="#f2f2f2" stroke-width="0.5"/><path d="M20.3 6 V31" stroke="#f2f2f2" stroke-width="0.5"/><path d="M25.4 6 V31" stroke="#f2f2f2" stroke-width="0.5"/><path d="M30.5 6 V31" stroke="#f2f2f2" stroke-width="0.5"/><path d="M35.6 6 V31" stroke="#f2f2f2" stroke-width="0.5"/><path d="M40.7 6 V31" stroke="#f2f2f2" stroke-width="0.5"/><path d="M45.8 6 V31" stroke="#f2f2f2" stroke-width="0.5"/><path d="M50.9 6 V31" stroke="#f2f2f2" stroke-width="0.5"/><path d="M5 9.1 H55" stroke="#f2f2f2" stroke-width="0.5"/><path d="M5 12.2 H55" stroke="#f2f2f2" stroke-width="0.5"/><path d="M5 15.3 H55" stroke="#f2f2f2" stroke-width="0.5"/><path d="M5 18.4 H55" stroke="#f2f2f2" stroke-width="0.5"/><path d="M5 21.5 H55" stroke="#f2f2f2" stroke-width="0.5"/><path d="M5 24.6 H55" stroke="#f2f2f2" stroke-width="0.5"/><path d="M5 27.7 H55" stroke="#f2f2f2" stroke-width="0.5"/><rect x="5" y="6" width="50" height="25" fill="none" stroke="#d6d6d6" stroke-width="0.5"/><path d="M5 18.3 H55" stroke="#eab0b6" stroke-width="0.6"/><path d="M40 4.5 H48" stroke="#ccc" stroke-width="0.7"/><path d="M6 32.5 H54" stroke="#d4d4d4" stroke-width="0.6" stroke-dasharray="0.8 4"/><path d="M4 8 V30" stroke="#e0e0e0" stroke-width="0.5" stroke-dasharray="0.8 3"/></svg>
<svg style="left:613px;top:562px" width="61" height="37.5" viewBox="0 0 61 37.5"><rect x="1" y="1" width="59" height="35.5" fill="#fff" stroke="#c3d1d6" stroke-width="2"/><rect x="2.6" y="2.6" width="55.8" height="32.3" fill="#fff" stroke="#7d939b" stroke-width="0.8"/><path d="M10.1 6 V31" stroke="#f2f2f2" stroke-width="0.5"/><path d="M15.2 6 V31" stroke="#f2f2f2" stroke-width="0.5"/><path d="M20.3 6 V31" stroke="#f2f2f2" stroke-width="0.5"/><path d="M25.4 6 V31" stroke="#f2f2f2" stroke-width="0.5"/><path d="M30.5 6 V31" stroke="#f2f2f2" stroke-width="0.5"/><path d="M35.6 6 V31" stroke="#f2f2f2" stroke-width="0.5"/><path d="M40.7 6 V31" stroke="#f2f2f2" stroke-width="0.5"/><path d="M45.8 6 V31" stroke="#f2f2f2" stroke-width="0.5"/><path d="M50.9 6 V31" stroke="#f2f2f2" stroke-width="0.5"/><path d="M5 9.1 H55" stroke="#f2f2f2" stroke-width="0.5"/><path d="M5 12.2 H55" stroke="#f2f2f2" stroke-width="0.5"/><path d="M5 15.3 H55" stroke="#f2f2f2" stroke-width="0.5"/><path d="M5 18.4 H55" stroke="#f2f2f2" stroke-width="0.5"/><path d="M5 21.5 H55" stroke="#f2f2f2" stroke-width="0.5"/><path d="M5 24.6 H55" stroke="#f2f2f2" stroke-width="0.5"/><path d="M5 27.7 H55" stroke="#f2f2f2" stroke-width="0.5"/><rect x="5" y="6" width="50" height="25" fill="none" stroke="#d6d6d6" stroke-width="0.5"/><path d="M5 18.3 H55" stroke="#eab0b6" stroke-width="0.6"/><path d="M40 4.5 H48" stroke="#ccc" stroke-width="0.7"/><path d="M6 32.5 H54" stroke="#d4d4d4" stroke-width="0.6" stroke-dasharray="0.8 4"/><path d="M4 8 V30" stroke="#e0e0e0" stroke-width="0.5" stroke-dasharray="0.8 3"/></svg>
<svg style="left:700.3px;top:562px" width="61" height="37.5" viewBox="0 0 61 37.5"><rect x="1" y="1" width="59" height="35.5" fill="#fff" stroke="#c3d1d6" stroke-width="2"/><rect x="2.6" y="2.6" width="55.8" height="32.3" fill="#fff" stroke="#7d939b" stroke-width="0.8"/><rect x="8" y="6" width="33" height="25" fill="none" stroke="#ececec" stroke-width="0.5"/><path d="M9.5 10 V15 M9.5 19 V24" stroke="#c44a58" stroke-width="0.8"/><circle cx="45.5" cy="12.5" r="0.6" fill="#c44a58"/><circle cx="45.5" cy="22" r="0.6" fill="#c44a58"/><path d="M48 12.5 H56 M48 22 H56" stroke="#c9ccd2" stroke-width="0.9"/><path d="M4.5 12 H7 M4.5 21 H7 M9 32 H12 M22 32 H25 M35 32 H38" stroke="#c4c8cc" stroke-width="0.6"/><path d="M40 4.5 H48" stroke="#ccc" stroke-width="0.7"/></svg>
<div style="left:427.6px;top:599.6px;width:83.4px;height:11.6px;background:#4b7181"></div>
<span class="t" style="left:450.30px;top:601.38px;font-size:8.88px;line-height:8.88px;font-weight:400;color:#eef4f6;font-family:'Liberation Sans';transform:scaleX(0.8754);transform-origin:0 0;">RMS Level</span>
<span class="t" style="left:548.25px;top:601.38px;font-size:8.88px;line-height:8.88px;font-weight:400;color:#2b2b2b;font-family:'Liberation Sans';transform:scaleX(0.8800);transform-origin:0 0;">Gain</span>
<span class="t" style="left:614.30px;top:601.38px;font-size:8.88px;line-height:8.88px;font-weight:400;color:#2b2b2b;font-family:'Liberation Sans';transform:scaleX(0.8840);transform-origin:0 0;">Relative  Level...</span>
<span class="t" style="left:691.50px;top:601.38px;font-size:8.88px;line-height:8.88px;font-weight:400;color:#2b2b2b;font-family:'Liberation Sans';transform:scaleX(0.9523);transform-origin:0 0;">Deviation (20.0000...</span>
<div style="left:809.5px;top:613.8px;width:1.5px;height:1.5px;background:#c8d8de"></div>
<div style="left:812.3px;top:613.8px;width:1.5px;height:1.5px;background:#c8d8de"></div>
<div style="left:815.1px;top:613.8px;width:1.5px;height:1.5px;background:#c8d8de"></div>
<span class="t" style="left:426.50px;top:621.71px;font-size:9.2px;line-height:9.2px;font-weight:400;color:#2b2b2b;font-family:'Liberation Sans';transform:scaleX(0.8923);transform-origin:0 0;">Data Sets</span>
<div style="left:470.5px;top:619px;width:0.8px;height:14px;background:#bfcbcf"></div>
<svg style="left:475.5px;top:620.5px" width="9" height="9" viewBox="0 0 9 9"><rect x="0.5" y="0.5" width="8" height="8" rx="1" fill="#2f6287" stroke="#23486a" stroke-width="0.8"/><path d="M2.2 4.6 L3.8 6.2 L6.8 2.7" fill="none" stroke="#fff" stroke-width="1"/></svg>
<svg style="left:491.5px;top:620.5px" width="9" height="9" viewBox="0 0 9 9"><rect x="0.7" y="0.7" width="7.6" height="7.6" rx="1" fill="#fff" stroke="#23486a" stroke-width="1.2"/></svg>
<div style="left:506px;top:619px;width:0.8px;height:14px;background:#bfcbcf"></div>
<svg style="left:510.5px;top:619.5px" width="11" height="11" viewBox="0 0 11 11"><rect width="11" height="11" fill="#3f5b66"/><path d="M1 3 H10 M1 5.5 H10 M1 8 H10 M3.5 1 V10 M6 1 V10" stroke="#dfe6e8" stroke-width="0.6"/><path d="M6 6 L10 10 M10 6 L6 10" stroke="#fff" stroke-width="1.1"/></svg>
<span class="t" style="left:523.50px;top:621.71px;font-size:9.2px;line-height:9.2px;font-weight:400;color:#2b2b2b;font-family:'Liberation Sans';transform:scaleX(0.9562);transform-origin:0 0;">Clear Data</span>
<svg style="left:570px;top:625px" width="4" height="3" viewBox="0 0 4 3"><path d="M0 0.3 H4 L2 2.8Z" fill="#1a1a1a"/></svg>
<svg style="left:579px;top:619.5px" width="11" height="11" viewBox="0 0 11 11"><rect width="11" height="11" fill="#3f5b66"/><path d="M1 3 H10 M1 5.5 H10 M1 8 H10 M3.5 1 V10 M6.5 1 V10" stroke="#dfe6e8" stroke-width="0.6"/><path d="M1 7.5 H6 M4.3 5.8 L6 7.5 L4.3 9.2" fill="none" stroke="#fff" stroke-width="1"/></svg>
<span class="t" style="left:593.00px;top:621.71px;font-size:9.2px;line-height:9.2px;font-weight:400;color:#2b2b2b;font-family:'Liberation Sans';transform:scaleX(1.0942);transform-origin:0 0;">Import</span>
<svg style="left:627px;top:619.5px" width="11" height="11" viewBox="0 0 11 11"><rect width="11" height="11" fill="#3f5b66"/><path d="M1 3 H10 M1 5.5 H10 M1 8 H10 M3.5 1 V10 M6.5 1 V10" stroke="#dfe6e8" stroke-width="0.6"/><path d="M5 7.5 H10 M8.3 5.8 L10 7.5 L8.3 9.2" fill="none" stroke="#fff" stroke-width="1"/></svg>
<span class="t" style="left:640.50px;top:621.71px;font-size:9.2px;line-height:9.2px;font-weight:400;color:#2b2b2b;font-family:'Liberation Sans';transform:scaleX(1.0353);transform-origin:0 0;">Export</span>
<svg style="left:673.5px;top:619.5px" width="11" height="11" viewBox="0 0 11 11"><rect width="11" height="11" fill="#1f4756"/><path d="M5.71 1.21 L6.54 1.33 L6.83 2.70 L7.35 3.01 L8.69 2.61 L9.19 3.29 L8.42 4.46 L8.57 5.05 L9.79 5.71 L9.67 6.54 L8.30 6.83 L7.99 7.35 L8.39 8.69 L7.71 9.19 L6.54 8.42 L5.95 8.57 L5.29 9.79 L4.46 9.67 L4.17 8.30 L3.65 7.99 L2.31 8.39 L1.81 7.71 L2.58 6.54 L2.43 5.95 L1.21 5.29 L1.33 4.46 L2.70 4.17 L3.01 3.65 L2.61 2.31 L3.29 1.81 L4.46 2.58 L5.05 2.43Z" fill="#f4f7f8"/><circle cx="5.5" cy="5.5" r="1.25" fill="#1f4756"/></svg>
<span class="t" style="left:687.00px;top:621.71px;font-size:9.2px;line-height:9.2px;font-weight:400;color:#2b2b2b;font-family:'Liberation Sans';transform:scaleX(0.9878);transform-origin:0 0;">Data Settings</span>
<svg style="left:1186px;top:621px" width="10" height="10" viewBox="0 0 10 10"><path d="M5 1 V6 M2.8 3.8 L5 6 L7.2 3.8" fill="none" stroke="#1f4756" stroke-width="1.2"/><path d="M1 8.5 H9" stroke="#1f4756" stroke-width="1.4"/></svg>
<div style="left:423.5px;top:635px;width:776.5px;height:66px;background:#f0f0f0"></div>
<div style="left:424px;top:635.3px;width:752.5px;height:17px;background:#f0f0f0;border-bottom:1px solid #d4d4d4"></div>
<div style="left:424px;top:652.3px;width:752.5px;height:16px;background:#fff;border-bottom:1px solid #dcdcdc"></div>
<div style="left:440.3px;top:635.3px;width:1px;height:33px;background:#dcdcdc"></div>
<div style="left:499.5px;top:635.3px;width:1px;height:33px;background:#dcdcdc"></div>
<div style="left:593px;top:635.3px;width:1px;height:33px;background:#dcdcdc"></div>
<div style="left:1176px;top:635.3px;width:1px;height:33px;background:#dcdcdc"></div>
<span class="t" style="left:454.75px;top:641.48px;font-size:8.88px;line-height:8.88px;font-weight:400;color:#333;font-family:'Liberation Sans';transform:scaleX(0.8829);transform-origin:0 0;">Data Set</span>
<span class="t" style="left:538.20px;top:641.48px;font-size:8.88px;line-height:8.88px;font-weight:400;color:#333;font-family:'Liberation Sans';transform:scaleX(0.8760);transform-origin:0 0;">Time</span>
<span class="t" style="left:874.05px;top:641.48px;font-size:8.88px;line-height:8.88px;font-weight:400;color:#333;font-family:'Liberation Sans';transform:scaleX(0.9272);transform-origin:0 0;">Notes</span>
<svg style="left:425.5px;top:655px" width="9" height="9" viewBox="0 0 9 9"><rect x="0.5" y="0.5" width="8" height="8" fill="#f4f4f4" stroke="#b5b5b5" stroke-width="0.8"/><path d="M2 4.6 L3.7 6.3 L7.3 2.3" fill="none" stroke="#9a9a9a" stroke-width="1"/></svg>
<span class="t" style="left:442.50px;top:654.68px;font-size:8.88px;line-height:8.88px;font-weight:400;color:#333;font-family:'Liberation Sans';transform:scaleX(0.8960);transform-origin:0 0;">Measured 1</span>
<span class="t" style="left:501.50px;top:654.68px;font-size:8.88px;line-height:8.88px;font-weight:400;color:#333;font-family:'Liberation Sans';transform:scaleX(0.9869);transform-origin:0 0;">2025/10/9 17:52:47</span>
<span class="t" style="left:614.50px;top:705.01px;font-size:9.2px;line-height:9.2px;font-weight:400;color:#333;font-family:'Liberation Sans';transform:scaleX(1.0119);transform-origin:0 0;">Output:</span>
<div style="left:650px;top:703.7px;width:132px;height:11.5px;background:#000"></div>
<span class="t" style="left:653.00px;top:704.63px;font-size:9.42px;line-height:9.42px;font-weight:400;color:#14c814;font-family:'Liberation Sans';transform:scaleX(0.9753);transform-origin:0 0;-webkit-text-stroke:0.35px #14c814;">Analog Balanced 2 Ch, 40 ohm</span>
<span class="t" style="left:786.50px;top:705.01px;font-size:9.2px;line-height:9.2px;font-weight:400;color:#333;font-family:'Liberation Sans';transform:scaleX(1.0275);transform-origin:0 0;">Input 1:</span>
<div style="left:822.5px;top:703.7px;width:139.5px;height:11.5px;background:#000"></div>
<span class="t" style="left:825.50px;top:704.63px;font-size:9.42px;line-height:9.42px;font-weight:400;color:#14c814;font-family:'Liberation Sans';transform:scaleX(0.9632);transform-origin:0 0;-webkit-text-stroke:0.35px #14c814;">Analog Balanced 2 Ch, 200 kohm</span>
<div style="left:965.5px;top:703.7px;width:59.5px;height:11.5px;background:#000"></div>
<span class="t" style="left:968.50px;top:704.63px;font-size:9.42px;line-height:9.42px;font-weight:400;color:#14c814;font-family:'Liberation Sans';transform:scaleX(0.9713);transform-origin:0 0;-webkit-text-stroke:0.35px #14c814;">310.0 mVrms</span>
<div style="left:1027.5px;top:703.7px;width:88px;height:11.5px;background:#000"></div>
<span class="t" style="left:1030.50px;top:704.63px;font-size:9.42px;line-height:9.42px;font-weight:400;color:#14c814;font-family:'Liberation Sans';transform:scaleX(0.9366);transform-origin:0 0;-webkit-text-stroke:0.35px #14c814;">AC (&lt;10 Hz) - 1 MHz</span>
<span class="t" style="left:1121.50px;top:705.01px;font-size:9.2px;line-height:9.2px;font-weight:400;color:#333;font-family:'Liberation Sans';transform:scaleX(1.0438);transform-origin:0 0;">Input 2:</span>
<div style="left:1158.8px;top:703.7px;width:28.2px;height:11.5px;background:#000"></div>
<span class="t" style="left:1161.80px;top:704.63px;font-size:9.42px;line-height:9.42px;font-weight:400;color:#14c814;font-family:'Liberation Sans';transform:scaleX(1.0222);transform-origin:0 0;-webkit-text-stroke:0.35px #14c814;">None</span>
<div style="left:1060px;top:685.5px;width:140px;height:15.5px;background:rgba(250,252,253,0.9)"></div>
<svg style="left:1057px;top:682px" width="24" height="22" viewBox="0 0 24 22"><rect x="3" y="2.5" width="17.5" height="17" rx="3.5" fill="#f2541b" transform="rotate(-14 11.75 11)"/><path d="M16 7.2 Q13.5 5.6 10 6.3 Q6.2 7.2 7.4 9.8 Q8.3 11.3 12 11.6 Q15.8 12 15.4 14 Q14.8 16.3 10.5 16 Q7.8 15.8 6.5 14.6" fill="none" stroke="#fff" stroke-width="2.6" stroke-linecap="round"/></svg>
<span class="t" style="left:1084.80px;top:688.74px;font-size:10.7px;line-height:10.7px;font-weight:700;color:#1a6fd6;font-family:'Liberation Sans';transform:scaleX(0.9545);transform-origin:0 0;">中</span>
<svg style="left:1103px;top:689.5px" width="9" height="8" viewBox="0 0 9 8"><circle cx="2" cy="2.5" r="1.3" fill="#1a6fd6"/><path d="M6.2 4 Q6.8 5.5 5.5 7" fill="none" stroke="#1a6fd6" stroke-width="1.3"/></svg>
<svg style="left:1119px;top:687.5px" width="9" height="12" viewBox="0 0 9 12"><rect x="2.5" y="0.5" width="4" height="7" rx="2" fill="#1a6fd6"/><path d="M1 5 Q1 9 4.5 9 Q8 9 8 5 M4.5 9 V11.5" fill="none" stroke="#1a6fd6" stroke-width="1"/></svg>
<svg style="left:1135px;top:689px" width="12" height="9" viewBox="0 0 12 9"><rect x="0.6" y="0.6" width="10.8" height="7.8" rx="1" fill="none" stroke="#1a6fd6" stroke-width="1.1"/><path d="M2.5 3 H9.5 M2.5 5 H9.5 M3.5 7 H8.5" stroke="#1a6fd6" stroke-width="0.9"/></svg>
<svg style="left:1151.5px;top:686px" width="14" height="13" viewBox="0 0 14 13"><path d="M1 3 L5 4 Q7 3 9 4 L12.5 3 L11 11 Q7 13 3 11Z" fill="#9a5ee0"/><path d="M9 4 L12.5 3 L11 11 Q9 12 7.5 12Z" fill="#e0508a"/><circle cx="11.8" cy="2" r="1.8" fill="#e83030"/></svg>
<svg style="left:1170px;top:688px" width="11" height="11" viewBox="0 0 11 11"><rect x="0.5" y="0.5" width="4.3" height="4.3" rx="1.2" fill="#1a6fd6"/><rect x="6" y="0.5" width="4.3" height="4.3" rx="1.2" fill="#1a6fd6"/><rect x="0.5" y="6" width="4.3" height="4.3" rx="1.2" fill="#1a6fd6"/><rect x="6" y="6" width="4.3" height="4.3" rx="1.2" fill="#1a6fd6"/></svg>
<svg style="left:1186.5px;top:687.5px" width="12" height="12" viewBox="0 0 12 12"><path d="M6 0.8 L7.5 3.3 H10.5 L9 6 L10.5 8.7 H7.5 L6 11.2 L4.5 8.7 H1.5 L3 6 L1.5 3.3 H4.5Z" fill="#1a6fd6"/><circle cx="6" cy="6" r="1.6" fill="#fff"/></svg>
<div style="left:0px;top:715.5px;width:1200px;height:0.8px;background:#c9d3ce"></div>
<svg style="left:12px;top:725px" width="20" height="17" viewBox="0 0 20 17"><defs><linearGradient id="cl" x1="0" y1="0" x2="0" y2="1"><stop offset="0" stop-color="#e4f0fb"/><stop offset="1" stop-color="#a9c9ec"/></linearGradient></defs><circle cx="13.5" cy="5.3" r="3.6" fill="#f7a21b"/><path d="M11 2.2 A3.6 3.6 0 0 1 17 5" fill="none" stroke="#ee6a12" stroke-width="1.2"/><path d="M4 16 Q0.6 16 0.8 12.8 Q1.1 10.2 3.8 10.1 Q4.8 6.6 8.8 6.8 Q12.3 7.1 12.9 10 Q16.5 9.8 16.6 13 Q16.6 16 13.4 16Z" fill="url(#cl)" stroke="#8fb4dc" stroke-width="0.7"/></svg>
<span class="t" style="left:35.80px;top:723.78px;font-size:8.88px;line-height:8.88px;font-weight:400;color:#1a1a1a;font-family:'Liberation Sans';transform:scaleX(0.8315);transform-origin:0 0;-webkit-text-stroke:0.4px #1a1a1a;">31°C</span>
<span class="t" style="left:35.80px;top:734.90px;font-size:9.1px;line-height:9.1px;font-weight:400;color:#555;font-family:'Liberation Sans';transform:scaleX(0.9722);transform-origin:0 0;">多云</span>
<svg style="left:483px;top:725px" width="17" height="17" viewBox="0 0 17 17"><defs><linearGradient id="wl" x1="0" y1="0" x2="1" y2="1"><stop offset="0" stop-color="#3ccbf4"/><stop offset="1" stop-color="#1072d6"/></linearGradient></defs><rect x="0" y="0" width="8" height="8" fill="url(#wl)"/><rect x="9" y="0" width="8" height="8" fill="url(#wl)"/><rect x="0" y="9" width="8" height="8" fill="url(#wl)"/><rect x="9" y="9" width="8" height="8" fill="url(#wl)"/></svg>
<svg style="left:513px;top:725px" width="19" height="17" viewBox="0 0 19 17"><rect x="6" y="0.5" width="12" height="11" rx="1.5" fill="#f4f4f4" stroke="#cfcfcf" stroke-width="0.6"/><rect x="0.5" y="5" width="12" height="11.5" rx="1.5" fill="#1e1e1e"/><rect x="6" y="5" width="6.5" height="6.5" fill="#9a9a9a"/></svg>
<svg style="left:545px;top:724px" width="18" height="17" viewBox="0 0 18 17"><path d="M0.5 2 Q0.5 1 1.5 1 H6.5 L8 2.5 H16.5 Q17.5 2.5 17.5 3.5 V15 Q17.5 16 16.5 16 H1.5 Q0.5 16 0.5 15Z" fill="#f7c53a"/><path d="M0.5 5 H17.5 V15 Q17.5 16 16.5 16 H1.5 Q0.5 16 0.5 15Z" fill="#fcd86a"/><rect x="4.5" y="11" width="9" height="3.5" rx="0.8" fill="#1a78c8"/></svg>
<div style="left:552px;top:745.3px;width:5px;height:1.8px;background:#6e6e6e;border-radius:1px"></div>
<svg style="left:576px;top:724px" width="18" height="18" viewBox="0 0 18 18"><defs><linearGradient id="eg" x1="0" y1="0" x2="1" y2="1"><stop offset="0" stop-color="#35c1f1"/><stop offset="0.6" stop-color="#1a84d8"/><stop offset="1" stop-color="#0c59a4"/></linearGradient></defs><circle cx="9" cy="9" r="8.5" fill="url(#eg)"/><path d="M5 9.5 Q5.5 5.5 9.5 5.5 Q13 5.5 13.5 8.5 H7.5 Q7.5 12 11 12.5 Q14 13 16.5 11.5 Q15 16.5 9.5 17 Q4.5 17 5 9.5Z" fill="#fff" opacity="0.95"/><path d="M8 10 Q8.5 13 12 13" fill="none" stroke="#48d35a" stroke-width="1.6"/></svg>
<svg style="left:607px;top:724px" width="18" height="18" viewBox="0 0 18 18"><circle cx="9" cy="9" r="8.5" fill="#db4437"/><path d="M9 9 L1.6 4.8 A8.5 8.5 0 0 0 9 17.5Z" fill="#0f9d58"/><path d="M9 9 L9 17.5 A8.5 8.5 0 0 0 16.4 4.8Z" fill="#f4c20d"/><path d="M9 9 L16.4 4.8 A8.5 8.5 0 0 0 1.6 4.8Z" fill="#db4437"/><circle cx="9" cy="9" r="4" fill="#fff"/><circle cx="9" cy="9" r="3.1" fill="#4285f4"/></svg>
<svg style="left:637px;top:723px" width="19" height="20" viewBox="0 0 19 20"><rect x="0.5" y="0.5" width="18" height="19" rx="3" fill="#fafafa"/><ellipse cx="9.5" cy="11" rx="5.3" ry="7" fill="#161616"/><ellipse cx="9.5" cy="13" rx="3.6" ry="4.2" fill="#fff"/><path d="M4.5 9.5 Q9.5 12 14.5 9.5 L14 11.3 Q9.5 13.5 5 11.3Z" fill="#e0241c"/><ellipse cx="9.5" cy="8" rx="1.8" ry="1" fill="#f5b82e"/><ellipse cx="6" cy="18" rx="2.2" ry="1" fill="#f5b82e"/><ellipse cx="13" cy="18" rx="2.2" ry="1" fill="#f5b82e"/></svg>
<div style="left:644.3px;top:745.3px;width:5px;height:1.8px;background:#6e6e6e;border-radius:1px"></div>
<div style="left:665px;top:719.5px;width:26.5px;height:26px;background:rgba(248,250,250,0.75);border-radius:4px"></div>
<svg style="left:667px;top:723px" width="23" height="19" viewBox="0 0 23 19"><path d="M10.5 1.4 Q22 2 21.7 9.4 Q21.3 17 10 17.8 Q19.4 15.6 19.6 9.4 Q19.7 3.5 10.5 1.4Z" fill="#2e6fa8"/><text x="1.8" y="13.2" font-family="Liberation Sans" font-weight="700" font-style="italic" font-size="10.8" fill="#173a5c" transform="scale(0.92 1)">AP</text></svg>
<div style="left:673.5px;top:745px;width:9.5px;height:2.4px;background:#1f78d1;border-radius:1.5px"></div>
<svg style="left:701px;top:723px" width="18" height="19" viewBox="0 0 18 19"><path d="M9 1 Q17 1 17 9 Q17 13 13.5 12.5 Q11 12.2 11.5 15 Q12 18 8.5 18 Q1 18 1 9.5 Q1 1 9 1Z" fill="#3ea8e8"/><circle cx="5.5" cy="7" r="1.6" fill="#f7d03c"/><circle cx="9" cy="4.8" r="1.6" fill="#e84c3d"/><circle cx="12.8" cy="6.5" r="1.5" fill="#6ad04c"/><circle cx="5" cy="11.5" r="1.5" fill="#9b59d0"/><path d="M11 17 L16 5" stroke="#a26a2a" stroke-width="1.6"/><path d="M15 3.5 L17 4.5 L16 6.5Z" fill="#e0b04a"/></svg>
<div style="left:706.3px;top:745.3px;width:5px;height:1.8px;background:#6e6e6e;border-radius:1px"></div>
<svg style="left:927px;top:729px" width="9" height="6" viewBox="0 0 9 6"><path d="M0.8 5.2 L4.5 1.2 L8.2 5.2" fill="none" stroke="#222" stroke-width="1"/></svg>
<svg style="left:946px;top:725px" width="14" height="16" viewBox="0 0 14 16"><ellipse cx="7" cy="8.5" rx="5" ry="6.5" fill="#161616"/><ellipse cx="7" cy="10.5" rx="3.2" ry="3.8" fill="#fff"/><path d="M2 7.5 Q7 10 12 7.5 L11.5 9.2 Q7 11.5 2.5 9.2Z" fill="#e0241c"/><circle cx="10.5" cy="12.5" r="3" fill="#2bc25a"/></svg>
<svg style="left:969px;top:727px" width="15" height="11" viewBox="0 0 15 11"><path d="M3.5 10 Q0.8 10 1 7.5 Q1.2 5.5 3.5 5.3 Q4 2 7.5 2 Q10.8 2 11.3 5.2 Q14 5.3 14 7.8 Q14 10 11.5 10Z" fill="#f4f6f6" stroke="#333" stroke-width="1"/></svg>
<svg style="left:992px;top:725px" width="14" height="16" viewBox="0 0 14 16"><path d="M7 0.8 L13 3 V8 Q13 13 7 15.5 Q1 13 1 8 V3Z" fill="#2a7ad6"/><path d="M7 0.8 L13 3 V8 Q13 13 7 15.5Z" fill="#1b5eb5"/><path d="M9.5 9 L12.5 14.5 H6.5Z" fill="#f7c21a" stroke="#fff" stroke-width="0.5"/></svg>
<svg style="left:1016px;top:724px" width="11" height="17" viewBox="0 0 11 17"><rect x="0.5" y="0.5" width="10" height="16" rx="5" fill="#2c88e8"/><path d="M3 5.5 L8 10.5 L5.5 13 V3.5 L8 6 L3 11" fill="none" stroke="#fff" stroke-width="0.9"/></svg>
<svg style="left:1037px;top:725px" width="12" height="15" viewBox="0 0 12 15"><path d="M6 1 V14 M2 4 H10 M2 8 H10 M3 11 H9" stroke="#9aa0a0" stroke-width="1.4"/><rect x="3" y="3" width="6" height="7" fill="none" stroke="#9aa0a0" stroke-width="1"/></svg>
<svg style="left:1063px;top:724px" width="15" height="15" viewBox="0 0 15 15"><path d="M2 2 Q1.5 1 3 1 H12.5 Q14 1 14 2.5 V12 Q14 14 12 14 H3 Q1.5 14 1.5 12.5 Z" fill="#f05a1c" transform="rotate(-8 7.5 7.5)"/><text x="7.8" y="11.5" text-anchor="middle" font-family="Liberation Sans" font-weight="700" font-size="11" fill="#fff" transform="rotate(-8 7.5 7.5)">S</text></svg>
<svg style="left:1090px;top:727px" width="14" height="11" viewBox="0 0 14 11"><path d="M1 4 Q7 -1.5 13 4 M3 6.3 Q7 2.8 11 6.3 M5 8.5 Q7 6.8 9 8.5" fill="none" stroke="#222" stroke-width="1"/><circle cx="7" cy="10" r="0.9" fill="#222"/></svg>
<svg style="left:1107px;top:727px" width="13" height="11" viewBox="0 0 13 11"><path d="M1 4 H3 L6 1.2 V9.8 L3 7 H1Z" fill="none" stroke="#222" stroke-width="0.9"/><path d="M8 3.5 Q9.3 5.5 8 7.5 M9.8 2 Q12 5.5 9.8 9" fill="none" stroke="#222" stroke-width="0.9"/></svg>
<svg style="left:1124px;top:725px" width="15" height="15" viewBox="0 0 15 15"><rect x="2" y="6" width="11" height="6.5" rx="1" fill="#222"/><path d="M1 4 L4 1 M4 4 L1 1" stroke="#222" stroke-width="0.9"/><rect x="13" y="8" width="1.5" height="2.5" fill="#222"/><path d="M4.5 9 H10" stroke="#d6e9df" stroke-width="1"/></svg>
<span class="t" style="left:1165.00px;top:723.51px;font-size:9.2px;line-height:9.2px;font-weight:400;color:#222;font-family:'Liberation Sans';transform:scaleX(0.9348);transform-origin:0 0;">17:53</span>
<span class="t" style="left:1148.00px;top:735.51px;font-size:9.2px;line-height:9.2px;font-weight:400;color:#222;font-family:'Liberation Sans';transform:scaleX(0.9664);transform-origin:0 0;">2025/10/9</span></body></html>
